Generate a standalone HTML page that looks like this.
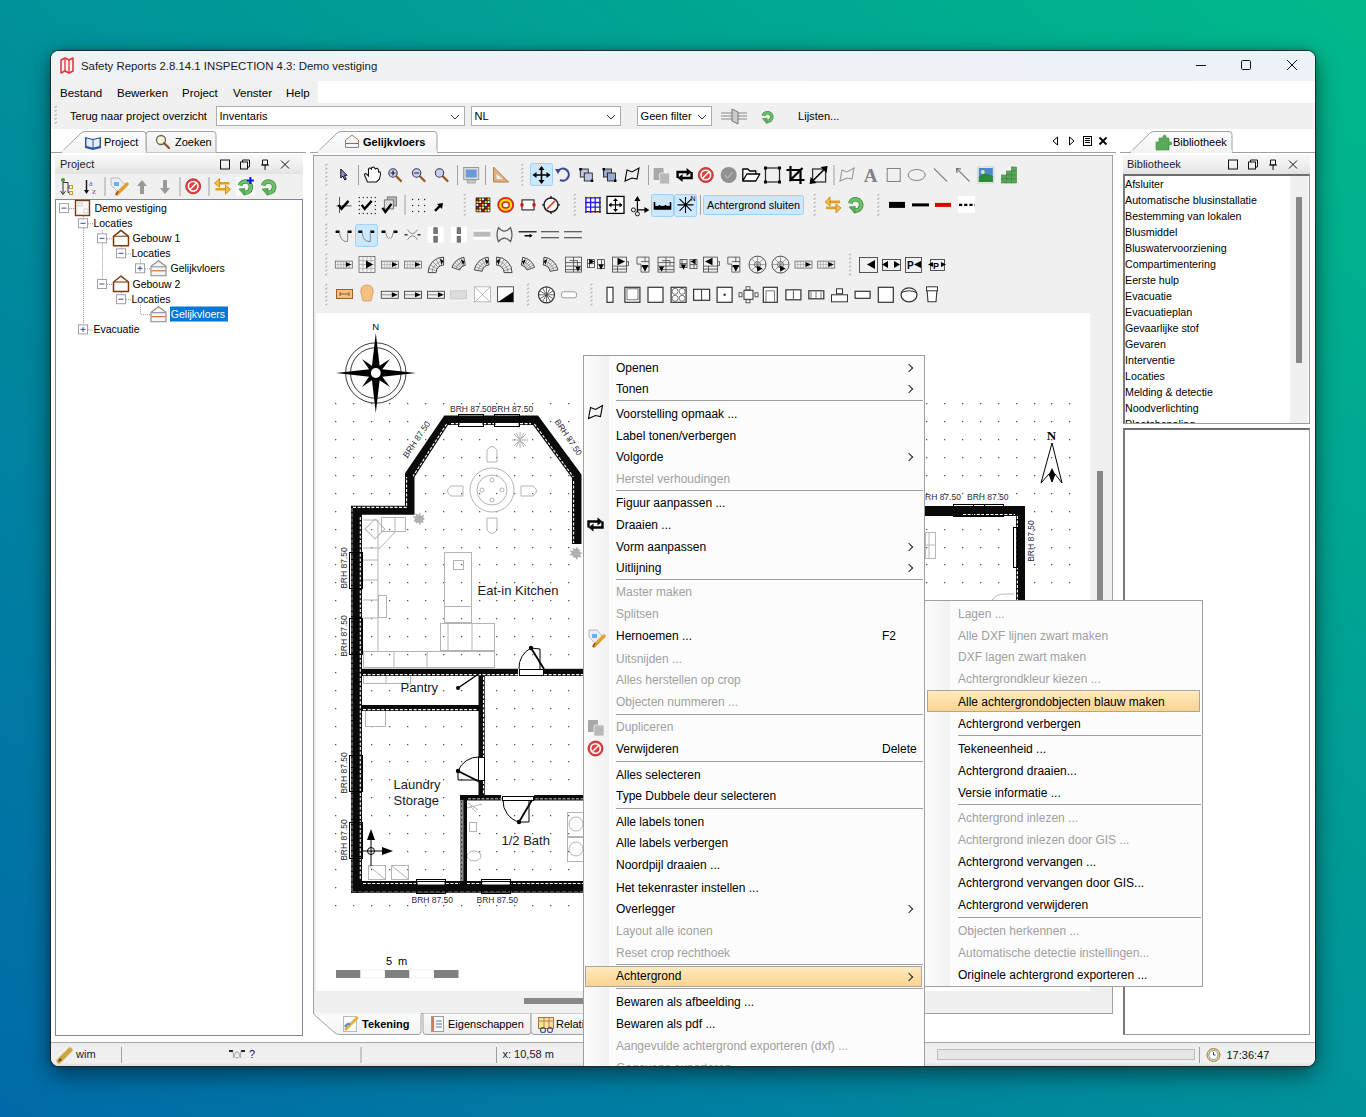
<!DOCTYPE html>
<html><head><meta charset="utf-8">
<style>
*{box-sizing:border-box;margin:0;padding:0}
html,body{width:1366px;height:1117px;overflow:hidden}
body{position:relative;font-family:"Liberation Sans",sans-serif;font-size:12px;color:#000;
background:linear-gradient(to top right,#006aa8 0%,#00929a 50%,#00b98a 100%);}
.a{position:absolute}
#shadow{position:absolute;left:51px;top:51px;width:1264px;height:1015px;border-radius:8px;box-shadow:0 0 0 1px rgba(35,35,35,.85),0 8px 24px rgba(0,0,0,.5),0 0 7px rgba(0,0,0,.3)}
#win{position:absolute;left:0;top:0;width:1366px;height:1117px;clip-path:inset(51px 51px 51px 51px round 8px);}
.menu{position:absolute;background:#fcfcfc;border:1px solid #a0a0a0;overflow:hidden}
.gut{position:absolute;left:0;top:0;bottom:0;width:25px;background:linear-gradient(to right,#fcfcfc,#f1f1f1)}
.mi{position:absolute;white-space:nowrap;font-size:12px;line-height:14px;color:#000}
.dis{color:#a0a0a0}
.sep{position:absolute;height:1px;background:#a0a0a0}
.hl{position:absolute;border:1px solid #a6a6a6;background:linear-gradient(#fdebbd,#fdd392)}
.arr{position:absolute;width:6px;height:6px;border-right:1.3px solid #222;border-top:1.3px solid #222;transform:rotate(45deg)}
</style></head><body>
<div id="shadow"></div>
<div id="win">
  <div class="a" style="left:51px;top:50px;width:1264px;height:1016px;background:#f0f0f0"></div>
  <div class="a" style="left:51px;top:50px;width:1264px;height:31px;background:linear-gradient(to right,#f1f2f4,#eef1f6 50%,#edf2f8)"></div>
  <div class="a" style="left:51px;top:81px;width:1264px;height:22px;background:#fff"></div>
  <div class="a" style="left:51px;top:81px;width:267px;height:22px;background:#f0f0f0"></div>
  <div class="a" style="left:51px;top:103px;width:1264px;height:26px;background:#f0f0f0"></div>
  <div class="a" style="left:51px;top:129px;width:1264px;height:913px;background:#fff"></div>
  <!-- left panel -->
  <div class="a" style="left:55px;top:174px;width:248px;height:25px;background:#f0f0f0"></div>
  <div class="a" style="left:55px;top:199px;width:248px;height:837px;background:#fff;border:1px solid #828790"></div>
  <!-- central panel -->
  <div class="a" style="left:313px;top:155px;width:800px;height:859px;background:#f0f0f0;border:1px solid #a0a0a0"></div>
  <!-- TB -->
<svg class="a" style="left:0;top:0" width="1366" height="1117" viewBox="0 0 1366 1117"><path d="M325.3 165.6 L327.3 164" stroke="#b4b4b4" stroke-width="1.2"/><path d="M325.3 169.6 L327.3 168" stroke="#b4b4b4" stroke-width="1.2"/><path d="M325.3 173.6 L327.3 172" stroke="#b4b4b4" stroke-width="1.2"/><path d="M325.3 177.6 L327.3 176" stroke="#b4b4b4" stroke-width="1.2"/><path d="M325.3 181.6 L327.3 180" stroke="#b4b4b4" stroke-width="1.2"/><path d="M325.3 185.6 L327.3 184" stroke="#b4b4b4" stroke-width="1.2"/><path d="M325.3 195.5 L327.3 193.9" stroke="#b4b4b4" stroke-width="1.2"/><path d="M325.3 199.5 L327.3 197.9" stroke="#b4b4b4" stroke-width="1.2"/><path d="M325.3 203.5 L327.3 201.9" stroke="#b4b4b4" stroke-width="1.2"/><path d="M325.3 207.5 L327.3 205.9" stroke="#b4b4b4" stroke-width="1.2"/><path d="M325.3 211.5 L327.3 209.9" stroke="#b4b4b4" stroke-width="1.2"/><path d="M325.3 215.5 L327.3 213.9" stroke="#b4b4b4" stroke-width="1.2"/><path d="M325.3 225.29999999999998 L327.3 223.7" stroke="#b4b4b4" stroke-width="1.2"/><path d="M325.3 229.29999999999998 L327.3 227.7" stroke="#b4b4b4" stroke-width="1.2"/><path d="M325.3 233.29999999999998 L327.3 231.7" stroke="#b4b4b4" stroke-width="1.2"/><path d="M325.3 237.29999999999998 L327.3 235.7" stroke="#b4b4b4" stroke-width="1.2"/><path d="M325.3 241.29999999999998 L327.3 239.7" stroke="#b4b4b4" stroke-width="1.2"/><path d="M325.3 245.29999999999998 L327.3 243.7" stroke="#b4b4b4" stroke-width="1.2"/><path d="M325.3 255.20000000000002 L327.3 253.60000000000002" stroke="#b4b4b4" stroke-width="1.2"/><path d="M325.3 259.20000000000005 L327.3 257.6" stroke="#b4b4b4" stroke-width="1.2"/><path d="M325.3 263.20000000000005 L327.3 261.6" stroke="#b4b4b4" stroke-width="1.2"/><path d="M325.3 267.20000000000005 L327.3 265.6" stroke="#b4b4b4" stroke-width="1.2"/><path d="M325.3 271.20000000000005 L327.3 269.6" stroke="#b4b4b4" stroke-width="1.2"/><path d="M325.3 275.20000000000005 L327.3 273.6" stroke="#b4b4b4" stroke-width="1.2"/><path d="M325.3 285.40000000000003 L327.3 283.8" stroke="#b4b4b4" stroke-width="1.2"/><path d="M325.3 289.40000000000003 L327.3 287.8" stroke="#b4b4b4" stroke-width="1.2"/><path d="M325.3 293.40000000000003 L327.3 291.8" stroke="#b4b4b4" stroke-width="1.2"/><path d="M325.3 297.40000000000003 L327.3 295.8" stroke="#b4b4b4" stroke-width="1.2"/><path d="M325.3 301.40000000000003 L327.3 299.8" stroke="#b4b4b4" stroke-width="1.2"/><path d="M325.3 305.40000000000003 L327.3 303.8" stroke="#b4b4b4" stroke-width="1.2"/><path d="M521.1999999999999 165.6 L523.1999999999999 164" stroke="#b4b4b4" stroke-width="1.2"/><path d="M521.1999999999999 169.6 L523.1999999999999 168" stroke="#b4b4b4" stroke-width="1.2"/><path d="M521.1999999999999 173.6 L523.1999999999999 172" stroke="#b4b4b4" stroke-width="1.2"/><path d="M521.1999999999999 177.6 L523.1999999999999 176" stroke="#b4b4b4" stroke-width="1.2"/><path d="M521.1999999999999 181.6 L523.1999999999999 180" stroke="#b4b4b4" stroke-width="1.2"/><path d="M521.1999999999999 185.6 L523.1999999999999 184" stroke="#b4b4b4" stroke-width="1.2"/><path d="M463.8 195.5 L465.8 193.9" stroke="#b4b4b4" stroke-width="1.2"/><path d="M463.8 199.5 L465.8 197.9" stroke="#b4b4b4" stroke-width="1.2"/><path d="M463.8 203.5 L465.8 201.9" stroke="#b4b4b4" stroke-width="1.2"/><path d="M463.8 207.5 L465.8 205.9" stroke="#b4b4b4" stroke-width="1.2"/><path d="M463.8 211.5 L465.8 209.9" stroke="#b4b4b4" stroke-width="1.2"/><path d="M463.8 215.5 L465.8 213.9" stroke="#b4b4b4" stroke-width="1.2"/><path d="M573.8 195.5 L575.8 193.9" stroke="#b4b4b4" stroke-width="1.2"/><path d="M573.8 199.5 L575.8 197.9" stroke="#b4b4b4" stroke-width="1.2"/><path d="M573.8 203.5 L575.8 201.9" stroke="#b4b4b4" stroke-width="1.2"/><path d="M573.8 207.5 L575.8 205.9" stroke="#b4b4b4" stroke-width="1.2"/><path d="M573.8 211.5 L575.8 209.9" stroke="#b4b4b4" stroke-width="1.2"/><path d="M573.8 215.5 L575.8 213.9" stroke="#b4b4b4" stroke-width="1.2"/><path d="M813.5999999999999 195.5 L815.5999999999999 193.9" stroke="#b4b4b4" stroke-width="1.2"/><path d="M813.5999999999999 199.5 L815.5999999999999 197.9" stroke="#b4b4b4" stroke-width="1.2"/><path d="M813.5999999999999 203.5 L815.5999999999999 201.9" stroke="#b4b4b4" stroke-width="1.2"/><path d="M813.5999999999999 207.5 L815.5999999999999 205.9" stroke="#b4b4b4" stroke-width="1.2"/><path d="M813.5999999999999 211.5 L815.5999999999999 209.9" stroke="#b4b4b4" stroke-width="1.2"/><path d="M813.5999999999999 215.5 L815.5999999999999 213.9" stroke="#b4b4b4" stroke-width="1.2"/><path d="M877.4 195.5 L879.4 193.9" stroke="#b4b4b4" stroke-width="1.2"/><path d="M877.4 199.5 L879.4 197.9" stroke="#b4b4b4" stroke-width="1.2"/><path d="M877.4 203.5 L879.4 201.9" stroke="#b4b4b4" stroke-width="1.2"/><path d="M877.4 207.5 L879.4 205.9" stroke="#b4b4b4" stroke-width="1.2"/><path d="M877.4 211.5 L879.4 209.9" stroke="#b4b4b4" stroke-width="1.2"/><path d="M877.4 215.5 L879.4 213.9" stroke="#b4b4b4" stroke-width="1.2"/><path d="M849.0999999999999 255.20000000000002 L851.0999999999999 253.60000000000002" stroke="#b4b4b4" stroke-width="1.2"/><path d="M849.0999999999999 259.20000000000005 L851.0999999999999 257.6" stroke="#b4b4b4" stroke-width="1.2"/><path d="M849.0999999999999 263.20000000000005 L851.0999999999999 261.6" stroke="#b4b4b4" stroke-width="1.2"/><path d="M849.0999999999999 267.20000000000005 L851.0999999999999 265.6" stroke="#b4b4b4" stroke-width="1.2"/><path d="M849.0999999999999 271.20000000000005 L851.0999999999999 269.6" stroke="#b4b4b4" stroke-width="1.2"/><path d="M849.0999999999999 275.20000000000005 L851.0999999999999 273.6" stroke="#b4b4b4" stroke-width="1.2"/><path d="M527.0 285.40000000000003 L529.0 283.8" stroke="#b4b4b4" stroke-width="1.2"/><path d="M527.0 289.40000000000003 L529.0 287.8" stroke="#b4b4b4" stroke-width="1.2"/><path d="M527.0 293.40000000000003 L529.0 291.8" stroke="#b4b4b4" stroke-width="1.2"/><path d="M527.0 297.40000000000003 L529.0 295.8" stroke="#b4b4b4" stroke-width="1.2"/><path d="M527.0 301.40000000000003 L529.0 299.8" stroke="#b4b4b4" stroke-width="1.2"/><path d="M527.0 305.40000000000003 L529.0 303.8" stroke="#b4b4b4" stroke-width="1.2"/><path d="M590.4 285.40000000000003 L592.4 283.8" stroke="#b4b4b4" stroke-width="1.2"/><path d="M590.4 289.40000000000003 L592.4 287.8" stroke="#b4b4b4" stroke-width="1.2"/><path d="M590.4 293.40000000000003 L592.4 291.8" stroke="#b4b4b4" stroke-width="1.2"/><path d="M590.4 297.40000000000003 L592.4 295.8" stroke="#b4b4b4" stroke-width="1.2"/><path d="M590.4 301.40000000000003 L592.4 299.8" stroke="#b4b4b4" stroke-width="1.2"/><path d="M590.4 305.40000000000003 L592.4 303.8" stroke="#b4b4b4" stroke-width="1.2"/><rect x="358" y="165" width="1" height="20" fill="#a0a0a0"/><rect x="457" y="165" width="1" height="20" fill="#a0a0a0"/><rect x="485" y="165" width="1" height="20" fill="#a0a0a0"/><rect x="648" y="165" width="1" height="20" fill="#a0a0a0"/><rect x="833.5" y="165" width="1" height="20" fill="#a0a0a0"/><rect x="404.5" y="194.9" width="1" height="20.0" fill="#a0a0a0"/><rect x="700" y="194.9" width="1" height="20.0" fill="#a0a0a0"/><rect x="530.5" y="163.5" width="22" height="22" rx="2" fill="#cce8ff" stroke="#99d1ff"/><rect x="651.5" y="194.5" width="22" height="22" rx="2" fill="#cce8ff" stroke="#99d1ff"/><rect x="674.5" y="194.5" width="22" height="22" rx="2" fill="#cce8ff" stroke="#99d1ff"/><rect x="355.5" y="224.5" width="22" height="22" rx="2" fill="#cce8ff" stroke="#99d1ff"/><rect x="703.5" y="195.5" width="100" height="19" rx="2" fill="#cce8ff" stroke="#99d1ff"/><text x="707" y="209" font-size="10.8" font-family="Liberation Sans" fill="#000">Achtergrond sluiten</text><path d="M340.8 169 L340.8 178 L342.8 176 L344.8 180 L346.3 179.2 L344.3 175.3 L347.0 175.3 Z" fill="#8c8cd8" stroke="#111" stroke-width="1"/><path d="M367.5 182 L364.5 175 Q364.5 173 366.5 174 L368.5 176 L368.5 169 Q369.5 167 371.5 169 L371.5 168 Q373.5 166 374.5 168 L375.5 169 Q377.5 167 378.5 170 L378.5 172 Q380.5 171 380.5 174 L379.5 179 L376.5 182 Z" fill="#fff" stroke="#111" stroke-width="1.1"/><path d="M396.5 176.5 L401 181" stroke="#9a5a20" stroke-width="2.4" stroke-linecap="round"/><circle cx="393" cy="173" r="4.2" fill="#c8d0f0" stroke="#3a3a5a" stroke-width="1.1"/><path d="M390.5 173 h5 M393 170.5 v5" stroke="#222" stroke-width="1.2"/><path d="M420.1 176.5 L424.6 181" stroke="#9a5a20" stroke-width="2.4" stroke-linecap="round"/><circle cx="416.6" cy="173" r="4.2" fill="#c8d0f0" stroke="#3a3a5a" stroke-width="1.1"/><path d="M414.1 173 h5" stroke="#222" stroke-width="1.2"/><path d="M443.0 176.5 L447.5 181" stroke="#9a5a20" stroke-width="2.4" stroke-linecap="round"/><circle cx="439.5" cy="173" r="4.2" fill="#c8d0f0" stroke="#3a3a5a" stroke-width="1.1"/><rect x="463.7" y="167.5" width="15" height="12" fill="#ddd" stroke="#999"/><rect x="465.7" y="169.5" width="11" height="8" fill="#6a9ad8"/><rect x="467.2" y="180" width="8" height="3" fill="#ccc" stroke="#999" stroke-width=".8"/><path d="M493.5 167 L508.5 182 L493.5 182 Z" fill="#e0b080" stroke="#b08050"/><path d="M496.5 174 L502.5 179 L496.5 179 Z" fill="#f0f0f0"/><path d="M541.5 167 L541.5 183 M533.5 175 L549.5 175" stroke="#000" stroke-width="1.6"/><path d="M538.5 170 L541.5 166 L544.5 170Z M538.5 180 L541.5 184 L544.5 180Z M536.5 172 L532.5 175 L536.5 178Z M546.5 172 L550.5 175 L546.5 178Z" fill="#000"/><path d="M558 171 A6 6 0 1 1 560 180" fill="none" stroke="#3a4a9a" stroke-width="2.2"/><path d="M555 169 L561 169 L558 174Z" fill="#3a4a9a"/><rect x="580.3" y="169" width="8" height="8" fill="#c0c4e4" stroke="#222" stroke-width=".9"/><rect x="584.3" y="173" width="8" height="8" fill="#c0c4e4" stroke="#222" stroke-width=".9"/><rect x="579.3" y="168" width="2.5" height="2.5" fill="#000"/><rect x="590.8" y="179.5" width="2.5" height="2.5" fill="#000"/><rect x="603.5" y="169" width="8" height="8" fill="#9aa8d0" stroke="#222" stroke-width=".9"/><rect x="607.5" y="173" width="8" height="8" fill="#9aa8d0" stroke="#222" stroke-width=".9"/><rect x="602.5" y="168" width="2.5" height="2.5" fill="#000"/><rect x="614.0" y="179.5" width="2.5" height="2.5" fill="#000"/><path d="M625 181 L627 170 L632 172 L639 168 L637 179 L632 178 Z" fill="none" stroke="#000" stroke-width="1.1"/><rect x="653.6" y="168" width="10" height="12" rx="1" fill="#a8a8a8"/><rect x="659.6" y="173" width="10" height="11" rx="1" fill="#b8b8b8" stroke="#f0f0f0" stroke-width=".8"/><path d="M677.6 178 L677.6 172 L687.6 172 M691.6 172 L691.6 178 L681.6 178" fill="none" stroke="#000" stroke-width="2.4"/><path d="M686.6 168 L691.6 172 L686.6 176Z M682.6 174 L677.6 178 L682.6 182Z" fill="#000"/><circle cx="705.8" cy="175" r="7.5" fill="#e04040" stroke="#b02020" stroke-width=".8"/><circle cx="705.8" cy="175" r="4.8" fill="none" stroke="#fff" stroke-width="1.6"/><path d="M702.3 178.5 L709.3 171.5" stroke="#fff" stroke-width="1.6"/><circle cx="728.7" cy="175" r="8" fill="#909090"/><path d="M724.7 175 L727.7 178 L732.7 172" stroke="#b0b0b0" stroke-width="1.6" fill="none"/><path d="M742.8 181 L742.8 169 L747.8 169 L749.8 171 L755.8 171 L755.8 174 M742.8 181 L746.8 174 L759.8 174 L755.8 181 Z" fill="#fff" stroke="#000" stroke-width="1.3" stroke-linejoin="round"/><rect x="765.5" y="168" width="14" height="14" fill="none" stroke="#222" stroke-width="1.2"/><rect x="764.0" y="166.5" width="3" height="3" fill="#000"/><rect x="764.0" y="180.5" width="3" height="3" fill="#000"/><rect x="778.0" y="166.5" width="3" height="3" fill="#000"/><rect x="778.0" y="180.5" width="3" height="3" fill="#000"/><path d="M790.5 166 L790.5 180 L804.5 180 M786.5 170 L800.5 170 L800.5 184 M789.5 181 L802.5 168" fill="none" stroke="#000" stroke-width="2.2"/><rect x="812.6" y="169" width="13" height="13" fill="none" stroke="#333" stroke-width="1.3"/><path d="M810.6 183 L826.6 167" stroke="#000" stroke-width="1.6"/><path d="M827.6 166 L820.6 167 L826.6 173Z M809.6 184 L816.6 183 L810.6 177Z" fill="#000"/><path d="M840 181 L842 170 L847 172 L854 168 L852 179 L847 178 Z" fill="none" stroke="#999" stroke-width="1.1"/><text x="870.7" y="182" font-family="Liberation Serif" font-weight="bold" font-size="19" text-anchor="middle" fill="#808080">A</text><rect x="887.2" y="168.5" width="13" height="13" fill="none" stroke="#808080" stroke-width="1"/><ellipse cx="916.7" cy="175" rx="8.5" ry="5.5" fill="none" stroke="#808080" stroke-width="1"/><path d="M934.0 168.5 L947.0 181.5" stroke="#808080" stroke-width="1.1"/><path d="M956.5 168.5 L969.5 181.5" stroke="#808080" stroke-width="1.1"/><path d="M956.5 168.5 L961 169 M956.5 168.5 L957 173" stroke="#666" stroke-width="1.1"/><rect x="977.8" y="167" width="16" height="16" fill="#fff" stroke="#ccc"/><rect x="978.8" y="168" width="14" height="14" fill="#4a8ad0"/><path d="M978.8 177 Q983.8 171 992.8 176 L992.8 182 L978.8 182 Z" fill="#2a8a3a"/><circle cx="982.8" cy="172" r="2" fill="#e8e8a0"/><rect x="1011.5" y="167" width="5" height="4" fill="#5aa55a" stroke="#3a853a" stroke-width=".6"/><rect x="1006.5" y="171" width="5" height="4" fill="#5aa55a" stroke="#3a853a" stroke-width=".6"/><rect x="1011.5" y="171" width="5" height="4" fill="#5aa55a" stroke="#3a853a" stroke-width=".6"/><rect x="1001.5" y="175" width="5" height="4" fill="#5aa55a" stroke="#3a853a" stroke-width=".6"/><rect x="1006.5" y="175" width="5" height="4" fill="#5aa55a" stroke="#3a853a" stroke-width=".6"/><rect x="1011.5" y="175" width="5" height="4" fill="#5aa55a" stroke="#3a853a" stroke-width=".6"/><rect x="1001.5" y="179" width="5" height="4" fill="#5aa55a" stroke="#3a853a" stroke-width=".6"/><rect x="1006.5" y="179" width="5" height="4" fill="#5aa55a" stroke="#3a853a" stroke-width=".6"/><rect x="1011.5" y="179" width="5" height="4" fill="#5aa55a" stroke="#3a853a" stroke-width=".6"/><path d="M336.5 205.9 L351.5 205.9 M339.5 196.9 L339.5 212.9" stroke="#555" stroke-width="1"/><path d="M338.5 204.9 L341.5 208.9 L348.5 200.9" stroke="#000" stroke-width="2.4" fill="none"/><rect x="358.7" y="196.9" width="1.2" height="1.2" fill="#222"/><rect x="358.7" y="212.9" width="1.2" height="1.2" fill="#222"/><rect x="362.7" y="196.9" width="1.2" height="1.2" fill="#222"/><rect x="362.7" y="212.9" width="1.2" height="1.2" fill="#222"/><rect x="366.7" y="196.9" width="1.2" height="1.2" fill="#222"/><rect x="366.7" y="212.9" width="1.2" height="1.2" fill="#222"/><rect x="370.7" y="196.9" width="1.2" height="1.2" fill="#222"/><rect x="370.7" y="212.9" width="1.2" height="1.2" fill="#222"/><rect x="374.7" y="196.9" width="1.2" height="1.2" fill="#222"/><rect x="374.7" y="212.9" width="1.2" height="1.2" fill="#222"/><rect x="358.7" y="200.9" width="1.2" height="1.2" fill="#222"/><rect x="358.7" y="204.9" width="1.2" height="1.2" fill="#222"/><rect x="358.7" y="208.9" width="1.2" height="1.2" fill="#222"/><rect x="374.7" y="200.9" width="1.2" height="1.2" fill="#222"/><rect x="374.7" y="204.9" width="1.2" height="1.2" fill="#222"/><rect x="374.7" y="208.9" width="1.2" height="1.2" fill="#222"/><path d="M361.7 204.9 L364.7 208.9 L371.7 200.9" stroke="#000" stroke-width="2.4" fill="none"/><rect x="387.4" y="196.9" width="9" height="9" fill="#bbb" stroke="#777"/><rect x="384.4" y="199.9" width="9" height="9" fill="#ddd" stroke="#777"/><path d="M382.4 207.9 L385.4 211.9 L391.4 203.9" stroke="#000" stroke-width="2.4" fill="none"/><rect x="412" y="198.9" width="1.2" height="1.2" fill="#222"/><rect x="412" y="204.9" width="1.2" height="1.2" fill="#222"/><rect x="412" y="210.9" width="1.2" height="1.2" fill="#222"/><rect x="418" y="198.9" width="1.2" height="1.2" fill="#222"/><rect x="418" y="204.9" width="1.2" height="1.2" fill="#222"/><rect x="418" y="210.9" width="1.2" height="1.2" fill="#222"/><rect x="424" y="198.9" width="1.2" height="1.2" fill="#222"/><rect x="424" y="204.9" width="1.2" height="1.2" fill="#222"/><rect x="424" y="210.9" width="1.2" height="1.2" fill="#222"/><path d="M435 210.9 L440 205.9" stroke="#000" stroke-width="2.5"/><path d="M443 202.9 L437 203.9 L442 208.9Z" fill="#000"/><rect x="475" y="196.9" width="16" height="16" fill="#fff"/><rect x="476.0" y="197.9" width="2.8" height="2.8" fill="#e00000"/><rect x="478.8" y="197.9" width="2.8" height="2.8" fill="#f0e000"/><rect x="481.6" y="197.9" width="2.8" height="2.8" fill="#ffffff"/><rect x="484.4" y="197.9" width="2.8" height="2.8" fill="#e00000"/><rect x="487.2" y="197.9" width="2.8" height="2.8" fill="#f0e000"/><rect x="476.0" y="200.7" width="2.8" height="2.8" fill="#f0e000"/><rect x="478.8" y="200.7" width="2.8" height="2.8" fill="#ffffff"/><rect x="481.6" y="200.7" width="2.8" height="2.8" fill="#e00000"/><rect x="484.4" y="200.7" width="2.8" height="2.8" fill="#f0e000"/><rect x="487.2" y="200.7" width="2.8" height="2.8" fill="#ffffff"/><rect x="476.0" y="203.5" width="2.8" height="2.8" fill="#ffffff"/><rect x="478.8" y="203.5" width="2.8" height="2.8" fill="#e00000"/><rect x="481.6" y="203.5" width="2.8" height="2.8" fill="#f0e000"/><rect x="484.4" y="203.5" width="2.8" height="2.8" fill="#ffffff"/><rect x="487.2" y="203.5" width="2.8" height="2.8" fill="#e00000"/><rect x="476.0" y="206.3" width="2.8" height="2.8" fill="#e00000"/><rect x="478.8" y="206.3" width="2.8" height="2.8" fill="#f0e000"/><rect x="481.6" y="206.3" width="2.8" height="2.8" fill="#ffffff"/><rect x="484.4" y="206.3" width="2.8" height="2.8" fill="#e00000"/><rect x="487.2" y="206.3" width="2.8" height="2.8" fill="#f0e000"/><rect x="476.0" y="209.1" width="2.8" height="2.8" fill="#f0e000"/><rect x="478.8" y="209.1" width="2.8" height="2.8" fill="#ffffff"/><rect x="481.6" y="209.1" width="2.8" height="2.8" fill="#e00000"/><rect x="484.4" y="209.1" width="2.8" height="2.8" fill="#f0e000"/><rect x="487.2" y="209.1" width="2.8" height="2.8" fill="#ffffff"/><path d="M476.0 197.9 v14 M476 197.9 h14" stroke="#000" stroke-width=".7"/><path d="M478.8 197.9 v14 M476 200.7 h14" stroke="#000" stroke-width=".7"/><path d="M481.6 197.9 v14 M476 203.5 h14" stroke="#000" stroke-width=".7"/><path d="M484.4 197.9 v14 M476 206.3 h14" stroke="#000" stroke-width=".7"/><path d="M487.2 197.9 v14 M476 209.1 h14" stroke="#000" stroke-width=".7"/><path d="M490.0 197.9 v14 M476 211.9 h14" stroke="#000" stroke-width=".7"/><ellipse cx="505.7" cy="204.9" rx="7.5" ry="7" fill="#f8e000" stroke="#e02020" stroke-width="1.8"/><ellipse cx="505.7" cy="204.9" rx="3.5" ry="3" fill="#f0f0f0" stroke="#e02020" stroke-width="1.5"/><rect x="522" y="199.9" width="12" height="10" fill="#fff" stroke="#222" stroke-width="1.1"/><rect x="520.5" y="203.4" width="3" height="3" fill="#d00"/><rect x="532.5" y="203.4" width="3" height="3" fill="#d00"/><circle cx="551" cy="204.9" r="7" fill="#fff" stroke="#222" stroke-width="1.5"/><path d="M547 208.9 L555 200.9" stroke="#e04020" stroke-width="1.6"/><path d="M551 195.9 v3 M551 213.9 v-3 M542 204.9 h3 M560 204.9 h-3" stroke="#222" stroke-width="1.4"/><rect x="585" y="196.9" width="16" height="16" fill="#f0c000"/><rect x="586" y="197.9" width="14" height="14" fill="#fff"/><path d="M586.0 196.9 v16 M585 197.9 h16" stroke="#2020e0" stroke-width="1.3"/><path d="M590.6 196.9 v16 M585 202.5 h16" stroke="#2020e0" stroke-width="1.3"/><path d="M595.2 196.9 v16 M585 207.1 h16" stroke="#2020e0" stroke-width="1.3"/><path d="M599.8 196.9 v16 M585 211.70000000000002 h16" stroke="#2020e0" stroke-width="1.3"/><rect x="607.0" y="196.4" width="17" height="17" fill="#fff" stroke="#000" stroke-width="1.3"/><path d="M615.5 198.9 v12 M609.5 204.9 h12" stroke="#000" stroke-width="1.1"/><path d="M613.0 200.9 L615.5 197.9 L618.0 200.9Z M613.0 208.9 L615.5 211.9 L618.0 208.9Z M611.5 202.4 L608.5 204.9 L611.5 207.4Z M619.5 202.4 L622.5 204.9 L619.5 207.4Z" fill="#000"/><path d="M637.4 211.9 L637.4 197.9 M637.4 209.9 L647.4 209.9" stroke="#000" stroke-width="1.2"/><path d="M634.4 200.9 L637.4 195.9 L640.4 200.9Z M644.4 206.9 L649.4 209.9 L644.4 212.9Z" fill="#000"/><circle cx="633.4" cy="209.9" r="2" fill="none" stroke="#000" stroke-width=".9"/><circle cx="637.4" cy="213.9" r="2" fill="none" stroke="#000" stroke-width=".9"/><path d="M654.5 201.9 L654.5 208.9 L670.5 208.9 L670.5 201.9 M659.5 208.9 v-4 M665.5 208.9 v-4" stroke="#000" stroke-width="1.6" fill="none"/><rect x="654.5" y="205.9" width="16" height="3" fill="#000"/><path d="M677.5 204.9 h16 M685.5 196.9 v16 M679.5 198.9 L691.5 210.9 M679.5 210.9 L691.5 198.9" stroke="#000" stroke-width="1.1"/><text x="690.5" y="200.9" font-size="7" font-family="Liberation Sans" fill="#000">N</text><path d="M840 201.9 L828 201.9 M826 207.9 L838 207.9" stroke="#e0a020" stroke-width="2.6"/><path d="M830 196.9 L825 201.9 L830 205.9Z M836 203.9 L841 207.9 L836 212.9Z" fill="#f0c040" stroke="#c08010" stroke-width=".8"/><path d="M850.2 203.4 A5.6 5.6 0 1 1 854.7 210.5" fill="none" stroke="#3f8f3f" stroke-width="4.6"/><path d="M850.2 203.4 A5.6 5.6 0 1 1 854.7 210.5" fill="none" stroke="#6cbf6c" stroke-width="3"/><path d="M849.2 206.9 L855.2 206.4 L854.7 213.4 Z" fill="#5aaf5a" stroke="#3f8f3f" stroke-width=".7"/><rect x="889" y="201.9" width="16" height="6" fill="#000"/><rect x="912" y="203.4" width="17" height="3" fill="#000"/><rect x="935" y="202.9" width="16" height="4" fill="#e00000"/><rect x="958" y="196" width="17" height="17" fill="#fff"/><path d="M959 204.9 h16" stroke="#000" stroke-width="2.4" stroke-dasharray="3.2 2"/><path d="M335.6 231.7 h4 M347.6 231.7 h4" stroke="#000" stroke-width="2.4"/><path d="M339.6 231.7 Q339.6 241.7 347.6 241.7 L347.6 231.7" fill="none" stroke="#888" stroke-width="1"/><path d="M358.3 231.7 h4 M370.3 231.7 h4" stroke="#000" stroke-width="2.4"/><path d="M362.3 231.7 Q362.3 241.7 370.3 241.7 L370.3 231.7" fill="none" stroke="#888" stroke-width="1"/><path d="M381.5 231.7 h4 M393.5 231.7 h4" stroke="#000" stroke-width="2.4"/><path d="M385.5 231.7 Q387.5 240.7 389.5 237.7 Q391.5 240.7 393.5 231.7" fill="none" stroke="#888" stroke-width="1"/><path d="M404.5 234.7 h3 M417.5 234.7 h3" stroke="#333" stroke-width="1.6"/><path d="M407.5 229.7 Q412.5 237.7 417.5 229.7 M407.5 239.7 Q412.5 231.7 417.5 239.7" fill="none" stroke="#888" stroke-width="1"/><rect x="427.6" y="226.7" width="16" height="16" fill="#fff"/><rect x="433.8" y="227.7" width="3.6" height="6" fill="#777" stroke="#555" stroke-width=".6"/><rect x="433.8" y="236.2" width="3.6" height="6" fill="#777" stroke="#555" stroke-width=".6"/><rect x="450.9" y="226.7" width="16" height="16" fill="#fff"/><rect x="457.09999999999997" y="227.7" width="3.6" height="6" fill="#777" stroke="#555" stroke-width=".6"/><rect x="457.09999999999997" y="236.2" width="3.6" height="6" fill="#777" stroke="#555" stroke-width=".6"/><rect x="473.5" y="229.7" width="17" height="10" fill="#fff"/><rect x="473.5" y="231.7" width="17" height="5" fill="#bbb"/><path d="M498.5 227.7 Q504.5 234.7 510.5 227.7 Q513.5 234.7 510.5 241.7 Q504.5 234.7 498.5 241.7 Q495.5 234.7 498.5 227.7Z" fill="none" stroke="#555" stroke-width="1.2"/><path d="M518.6 231.7 h18" stroke="#333" stroke-width="1.4"/><path d="M524.6 235.7 h6" stroke="#000" stroke-width="1.5"/><path d="M529.6 233.7 L532.6 235.7 L529.6 237.7Z" fill="#000"/><path d="M541 231.7 h18 M541 237.7 h18" stroke="#333" stroke-width="1.1"/><path d="M564 231.7 h18 M564 237.7 h18" stroke="#333" stroke-width="1.1"/><rect x="335.3" y="261.1" width="17" height="7" fill="none" stroke="#555" stroke-width=".7"/><path d="M335.3 264.6 h17" stroke="#999" stroke-width=".5"/><path d="M338.1 261.1 v7" stroke="#888" stroke-width=".5"/><path d="M340.9 261.1 v7" stroke="#888" stroke-width=".5"/><path d="M343.7 261.1 v7" stroke="#888" stroke-width=".5"/><path d="M346.5 261.1 v7" stroke="#888" stroke-width=".5"/><path d="M349.3 261.1 v7" stroke="#888" stroke-width=".5"/><path d="M345.8 262.1 L351.3 264.6 L345.8 267.1Z" fill="#000"/><rect x="359" y="256.6" width="16" height="16" fill="none" stroke="#555" stroke-width=".7"/><path d="M363 256.6 v16 M359 260.6 h16" stroke="#888" stroke-width=".5"/><path d="M367 256.6 v16 M359 264.6 h16" stroke="#888" stroke-width=".5"/><path d="M371 256.6 v16 M359 268.6 h16" stroke="#888" stroke-width=".5"/><path d="M366 260.6 L373 264.6 L366 268.6Z" fill="#000"/><rect x="381.5" y="261.1" width="17" height="7" fill="none" stroke="#555" stroke-width=".7"/><path d="M381.5 264.6 h17" stroke="#999" stroke-width=".5"/><path d="M384.3 261.1 v7" stroke="#888" stroke-width=".5"/><path d="M387.1 261.1 v7" stroke="#888" stroke-width=".5"/><path d="M389.9 261.1 v7" stroke="#888" stroke-width=".5"/><path d="M392.7 261.1 v7" stroke="#888" stroke-width=".5"/><path d="M395.5 261.1 v7" stroke="#888" stroke-width=".5"/><path d="M392 262.1 L397.5 264.6 L392 267.1Z" fill="#000"/><rect x="404.5" y="261.1" width="17" height="7" fill="none" stroke="#555" stroke-width=".7"/><path d="M404.5 264.6 h17" stroke="#999" stroke-width=".5"/><path d="M407.3 261.1 v7" stroke="#888" stroke-width=".5"/><path d="M410.1 261.1 v7" stroke="#888" stroke-width=".5"/><path d="M412.9 261.1 v7" stroke="#888" stroke-width=".5"/><path d="M415.7 261.1 v7" stroke="#888" stroke-width=".5"/><path d="M418.5 261.1 v7" stroke="#888" stroke-width=".5"/><path d="M415 262.1 L420.5 264.6 L415 267.1Z" fill="#000"/><circle cx="757.5" cy="264.6" r="8.5" fill="none" stroke="#444" stroke-width=".9"/><circle cx="757.5" cy="264.6" r="3" fill="none" stroke="#444" stroke-width=".8"/><path d="M757.5 264.6 L766.0 264.6" stroke="#666" stroke-width=".6"/><path d="M757.5 264.6 L763.5105468599343 270.61026841701226" stroke="#666" stroke-width=".6"/><path d="M757.5 264.6 L757.5003937777565 273.0999999908788" stroke="#666" stroke-width=".6"/><path d="M757.5 264.6 L751.4900100388088 270.61082528995655" stroke="#666" stroke-width=".6"/><path d="M757.5 264.6 L749.000000036485 264.6007875555121" stroke="#666" stroke-width=".6"/><path d="M757.5 264.6 L751.4888962929215 258.5902885075283" stroke="#666" stroke-width=".6"/><path d="M757.5 264.6 L757.498818666734 256.1000000820911" stroke="#666" stroke-width=".6"/><path d="M757.5 264.6 L763.5094330108543 258.5886178887003" stroke="#666" stroke-width=".6"/><path d="M756.5 265.6 L762.5 268.6 L757.5 271.6Z" fill="#000"/><circle cx="780.5" cy="264.6" r="8.5" fill="none" stroke="#444" stroke-width=".9"/><circle cx="780.5" cy="264.6" r="3" fill="none" stroke="#444" stroke-width=".8"/><path d="M780.5 264.6 L789.0 264.6" stroke="#666" stroke-width=".6"/><path d="M780.5 264.6 L786.5105468599343 270.61026841701226" stroke="#666" stroke-width=".6"/><path d="M780.5 264.6 L780.5003937777565 273.0999999908788" stroke="#666" stroke-width=".6"/><path d="M780.5 264.6 L774.4900100388088 270.61082528995655" stroke="#666" stroke-width=".6"/><path d="M780.5 264.6 L772.000000036485 264.6007875555121" stroke="#666" stroke-width=".6"/><path d="M780.5 264.6 L774.4888962929215 258.5902885075283" stroke="#666" stroke-width=".6"/><path d="M780.5 264.6 L780.498818666734 256.1000000820911" stroke="#666" stroke-width=".6"/><path d="M780.5 264.6 L786.5094330108543 258.5886178887003" stroke="#666" stroke-width=".6"/><path d="M779.5 265.6 L785.5 268.6 L780.5 271.6Z" fill="#000"/><rect x="795.0" y="261.1" width="17" height="7" fill="none" stroke="#555" stroke-width=".7"/><path d="M795.0 264.6 h17" stroke="#999" stroke-width=".5"/><path d="M797.8 261.1 v7" stroke="#888" stroke-width=".5"/><path d="M800.6 261.1 v7" stroke="#888" stroke-width=".5"/><path d="M803.4 261.1 v7" stroke="#888" stroke-width=".5"/><path d="M806.2 261.1 v7" stroke="#888" stroke-width=".5"/><path d="M809.0 261.1 v7" stroke="#888" stroke-width=".5"/><path d="M805.5 262.1 L811.0 264.6 L805.5 267.1Z" fill="#000"/><rect x="817.7" y="261.1" width="17" height="7" fill="none" stroke="#555" stroke-width=".7"/><path d="M817.7 264.6 h17" stroke="#999" stroke-width=".5"/><path d="M820.5 261.1 v7" stroke="#888" stroke-width=".5"/><path d="M823.3 261.1 v7" stroke="#888" stroke-width=".5"/><path d="M826.1 261.1 v7" stroke="#888" stroke-width=".5"/><path d="M828.9 261.1 v7" stroke="#888" stroke-width=".5"/><path d="M831.7 261.1 v7" stroke="#888" stroke-width=".5"/><path d="M828.2 262.1 L833.7 264.6 L828.2 267.1Z" fill="#000"/><rect x="565.5" y="257.1" width="16" height="15" stroke="#444" stroke-width=".8" fill="none"/><path d="M565.5 262.6 h16 M565.5 266.1 h16 M565.5 269.6 h16 M573.5 257.1 v15 M569.5 260.6 h8 v5" stroke="#444" stroke-width=".8" fill="none"/><path d="M575.3 266.44 L580.7 266.44 L578.0 271.84000000000003 Z" fill="#000"/><rect x="587.5" y="259.6" width="7" height="8" stroke="#444" stroke-width=".8" fill="none"/><rect x="597.5" y="259.6" width="7" height="9" stroke="#444" stroke-width=".8" fill="none"/><path d="M587.5 263.6 h7 M589.5 259.6 v8 M597.5 264.6 h7 M601.5 259.6 v9" stroke="#444" stroke-width=".8" fill="none"/><path d="M589.4 258.975 L589.4 264.225 L594.65 261.6 Z" fill="#000"/><path d="M598.375 264.5 L603.625 264.5 L601.0 269.75 Z" fill="#000"/><rect x="612.5" y="257.1" width="14" height="15" stroke="#444" stroke-width=".8" fill="none"/><path d="M612.5 266.1 h14 M612.5 269.1 h14 M617.5 266.1 v6 M626.5 261.6 h2 v4 h-2" stroke="#444" stroke-width=".8" fill="none"/><path d="M617.5 257.85 L617.5 265.35 L625.0 261.6 Z" fill="#000"/><path d="M637 257.1 h12 v15 h-8 v-8 h-4 z M641 261.6 h8 M641 266.6 h8 M645 257.1 v5" stroke="#444" stroke-width=".8" fill="none"/><path d="M641.625 264.90000000000003 L648.375 264.90000000000003 L645 271.65000000000003 Z" fill="#000"/><rect x="658" y="257.1" width="16" height="15" stroke="#444" stroke-width=".8" fill="none"/><path d="M658 262.6 h16 M658 266.1 h16 M658 269.6 h16 M666 257.1 v15 M662 260.6 h8 v5" stroke="#444" stroke-width=".8" fill="none"/><path d="M658.8 266.44 L664.2 266.44 L661.5 271.84000000000003 Z" fill="#000"/><rect x="680" y="259.6" width="7" height="8" stroke="#444" stroke-width=".8" fill="none"/><rect x="690" y="259.6" width="7" height="9" stroke="#444" stroke-width=".8" fill="none"/><path d="M680 263.6 h7 M682 259.6 v8 M690 264.6 h7 M694 259.6 v9" stroke="#444" stroke-width=".8" fill="none"/><path d="M680.875 264.5 L686.125 264.5 L683.5 269.75 Z" fill="#000"/><path d="M695.6 258.975 L695.6 264.225 L690.35 261.6 Z" fill="#000"/><rect x="703.5" y="257.1" width="14" height="15" stroke="#444" stroke-width=".8" fill="none"/><path d="M703.5 266.1 h14 M703.5 269.1 h14 M708.5 266.1 v6 M717.5 261.6 h2 v4 h-2" stroke="#444" stroke-width=".8" fill="none"/><path d="M712.5 257.85 L712.5 265.35 L705.0 261.6 Z" fill="#000"/><path d="M727.8 257.1 h12 v15 h-8 v-8 h-4 z M731.8 261.6 h8 M731.8 266.6 h8 M735.8 257.1 v5" stroke="#444" stroke-width=".8" fill="none"/><path d="M732.425 264.90000000000003 L739.175 264.90000000000003 L735.8 271.65000000000003 Z" fill="#000"/><path d="M428.1 272.6 A15.5 15.5 0 0 1 443.6 257.1 L443.6 265.1 A7.5 7.5 0 0 0 436.1 272.6 Z" fill="none" stroke="#333" stroke-width=".9"/><path d="M432.1 272.6 A11.5 11.5 0 0 1 443.6 261.1" fill="none" stroke="#777" stroke-width=".6"/><path d="M436.4 270.7 L428.6 268.6" stroke="#666" stroke-width=".6"/><path d="M437.1 268.9 L430.2 264.9" stroke="#666" stroke-width=".6"/><path d="M438.3 267.3 L432.6 261.6" stroke="#666" stroke-width=".6"/><path d="M439.9 266.1 L435.9 259.2" stroke="#666" stroke-width=".6"/><path d="M441.7 265.4 L439.6 257.6" stroke="#666" stroke-width=".6"/><path d="M443.6 261.1 L440.1 258.5 L441.5 264.4 Z" fill="#000"/><path d="M452.0 267.3 A15.5 15.5 0 0 1 463.9 257.3 L465.3 265.2 A7.5 7.5 0 0 0 459.6 270.0 Z" fill="none" stroke="#333" stroke-width=".9"/><path d="M455.8 268.7 A11.5 11.5 0 0 1 464.6 261.3" fill="none" stroke="#777" stroke-width=".6"/><path d="M460.1 268.9 L453.2 264.9" stroke="#666" stroke-width=".6"/><path d="M460.9 267.8 L454.7 262.6" stroke="#666" stroke-width=".6"/><path d="M461.8 266.9 L456.6 260.7" stroke="#666" stroke-width=".6"/><path d="M462.9 266.1 L458.9 259.2" stroke="#666" stroke-width=".6"/><path d="M464.0 265.6 L461.3 258.0" stroke="#666" stroke-width=".6"/><path d="M464.6 261.3 L460.7 259.4 L463.1 264.8 Z" fill="#000"/><path d="M474.3 269.9 A15.5 15.5 0 0 1 488.2 257.2 L488.9 265.1 A7.5 7.5 0 0 0 482.2 271.3 Z" fill="none" stroke="#333" stroke-width=".9"/><path d="M478.3 270.6 A11.5 11.5 0 0 1 488.6 261.1" fill="none" stroke="#777" stroke-width=".6"/><path d="M482.7 269.7 L475.3 266.7" stroke="#666" stroke-width=".6"/><path d="M483.5 268.3 L476.9 263.7" stroke="#666" stroke-width=".6"/><path d="M484.5 267.1 L479.1 261.2" stroke="#666" stroke-width=".6"/><path d="M485.9 266.1 L481.9 259.2" stroke="#666" stroke-width=".6"/><path d="M487.3 265.4 L484.9 257.8" stroke="#666" stroke-width=".6"/><path d="M488.6 261.1 L484.9 258.9 L486.8 264.6 Z" fill="#000"/><path d="M512.1 272.6 A15.5 15.5 0 0 0 496.6 257.1 L496.6 265.1 A7.5 7.5 0 0 1 504.1 272.6 Z" fill="none" stroke="#333" stroke-width=".9"/><path d="M508.1 272.6 A11.5 11.5 0 0 0 496.6 261.1" fill="none" stroke="#777" stroke-width=".6"/><path d="M503.8 270.7 L511.6 268.6" stroke="#666" stroke-width=".6"/><path d="M503.1 268.9 L510.0 264.9" stroke="#666" stroke-width=".6"/><path d="M501.9 267.3 L507.6 261.6" stroke="#666" stroke-width=".6"/><path d="M500.4 266.1 L504.4 259.2" stroke="#666" stroke-width=".6"/><path d="M498.5 265.4 L500.6 257.6" stroke="#666" stroke-width=".6"/><path d="M496.6 261.1 L500.1 258.5 L498.7 264.4 Z" fill="#000"/><path d="M534.6 267.3 A15.5 15.5 0 0 0 522.7 257.3 L521.3 265.2 A7.5 7.5 0 0 1 527.0 270.0 Z" fill="none" stroke="#333" stroke-width=".9"/><path d="M530.8 268.7 A11.5 11.5 0 0 0 522.0 261.3" fill="none" stroke="#777" stroke-width=".6"/><path d="M526.5 268.9 L533.4 264.9" stroke="#666" stroke-width=".6"/><path d="M525.7 267.8 L531.9 262.6" stroke="#666" stroke-width=".6"/><path d="M524.8 266.9 L530.0 260.7" stroke="#666" stroke-width=".6"/><path d="M523.8 266.1 L527.8 259.2" stroke="#666" stroke-width=".6"/><path d="M522.6 265.6 L525.3 258.0" stroke="#666" stroke-width=".6"/><path d="M522.0 261.3 L525.9 259.4 L523.5 264.8 Z" fill="#000"/><path d="M557.9 269.9 A15.5 15.5 0 0 0 544.0 257.2 L543.3 265.1 A7.5 7.5 0 0 1 550.0 271.3 Z" fill="none" stroke="#333" stroke-width=".9"/><path d="M553.9 270.6 A11.5 11.5 0 0 0 543.6 261.1" fill="none" stroke="#777" stroke-width=".6"/><path d="M549.5 269.7 L556.9 266.7" stroke="#666" stroke-width=".6"/><path d="M548.7 268.3 L555.3 263.7" stroke="#666" stroke-width=".6"/><path d="M547.7 267.1 L553.1 261.2" stroke="#666" stroke-width=".6"/><path d="M546.4 266.1 L550.4 259.2" stroke="#666" stroke-width=".6"/><path d="M544.9 265.4 L547.3 257.8" stroke="#666" stroke-width=".6"/><path d="M543.6 261.1 L547.3 258.9 L545.4 264.6 Z" fill="#000"/><rect x="859.5" y="257.5" width="18" height="15" fill="none" stroke="#444" stroke-width=".9"/><path d="M867 264.6 L875 260 L875 269Z" fill="#000"/><rect x="882.5" y="259.5" width="18" height="11" fill="none" stroke="#444" stroke-width=".9"/><path d="M882 264.6 L888 261 L888 268Z M900 264.6 L894 261 L894 268Z" fill="#000"/><rect x="905.5" y="257.5" width="16" height="15" fill="none" stroke="#444" stroke-width=".9"/><text x="907" y="269" font-size="10" font-weight="bold" font-family="Liberation Sans">P</text><path d="M914 264.6 L921 261 L921 268Z" fill="#000"/><rect x="930.5" y="259.5" width="14" height="11" fill="none" stroke="#444" stroke-width=".9"/><text x="933" y="269" font-size="9" font-weight="bold" font-family="Liberation Sans">P</text><path d="M928 264.6 L933 262 L933 267Z M946 264.6 L941 262 L941 267Z" fill="#000"/><rect x="336.5" y="289.5" width="16" height="9" fill="#f8c080" stroke="#a06020"/><path d="M340 294 h9 M340 292 v4 M349 292 v4" stroke="#805020" stroke-width=".9"/><path d="M363 301 L361 293 Q360 285 367 285 Q374 285 373 293 L371 301 Z" fill="#f8c080" stroke="#c09060" stroke-width=".7"/><rect x="381.3" y="291.3" width="17" height="7" fill="none" stroke="#444" stroke-width=".9"/><path d="M381.8 294.8 h10" stroke="#666" stroke-width=".7"/><path d="M391.8 292.3 L397.8 294.8 L391.8 297.3Z" fill="#000"/><rect x="404.5" y="291.3" width="17" height="7" fill="none" stroke="#444" stroke-width=".9"/><path d="M405 294.8 h10" stroke="#666" stroke-width=".7"/><path d="M415 292.3 L421 294.8 L415 297.3Z" fill="#000"/><rect x="427.5" y="291.3" width="17" height="7" fill="none" stroke="#444" stroke-width=".9"/><path d="M428 294.8 h10" stroke="#666" stroke-width=".7"/><path d="M438 292.3 L444 294.8 L438 297.3Z" fill="#000"/><rect x="450.5" y="290.8" width="16" height="8" fill="#ddd" stroke="#ccc"/><rect x="474.5" y="286.8" width="16" height="15" fill="#fff" stroke="#bbb"/><path d="M475 287 L490 302 M490 287 L475 302" stroke="#aaa" stroke-width=".8"/><rect x="497.5" y="286.8" width="16" height="15" fill="#fff" stroke="#555"/><path d="M498 302 L513 302 L513 292 Z" fill="#000"/><circle cx="546.5" cy="294.8" r="8" fill="#fff" stroke="#333" stroke-width="1.2"/><path d="M546.5 294.8 L554.5 294.8" stroke="#444" stroke-width=".8"/><path d="M546.5 294.8 L553.4 298.8" stroke="#444" stroke-width=".8"/><path d="M546.5 294.8 L550.5 301.7" stroke="#444" stroke-width=".8"/><path d="M546.5 294.8 L546.5 302.8" stroke="#444" stroke-width=".8"/><path d="M546.5 294.8 L542.5 301.7" stroke="#444" stroke-width=".8"/><path d="M546.5 294.8 L539.6 298.8" stroke="#444" stroke-width=".8"/><path d="M546.5 294.8 L538.5 294.8" stroke="#444" stroke-width=".8"/><path d="M546.5 294.8 L539.6 290.8" stroke="#444" stroke-width=".8"/><path d="M546.5 294.8 L542.5 287.9" stroke="#444" stroke-width=".8"/><path d="M546.5 294.8 L546.5 286.8" stroke="#444" stroke-width=".8"/><path d="M546.5 294.8 L550.5 287.9" stroke="#444" stroke-width=".8"/><path d="M546.5 294.8 L553.4 290.8" stroke="#444" stroke-width=".8"/><rect x="561.5" y="291.8" width="15" height="6" rx="2" fill="#fff" stroke="#999"/><rect x="607.0" y="287.3" width="6" height="15" fill="#fff" stroke="#333" stroke-width="1.2"/><rect x="624.9" y="287.3" width="15" height="15" fill="#fff" stroke="#333" stroke-width="1.2"/><rect x="627" y="288.8" width="11" height="11" fill="none" stroke="#555" stroke-width=".8"/><rect x="648.0" y="287.3" width="15" height="15" fill="#fff" stroke="#333" stroke-width="1.2"/><rect x="671.1" y="287.3" width="15" height="15" fill="#fff" stroke="#333" stroke-width="1.2"/><circle cx="675.1" cy="291.3" r="3" fill="none" stroke="#555" stroke-width=".8"/><circle cx="675.1" cy="298.3" r="3" fill="none" stroke="#555" stroke-width=".8"/><circle cx="682.1" cy="291.3" r="3" fill="none" stroke="#555" stroke-width=".8"/><circle cx="682.1" cy="298.3" r="3" fill="none" stroke="#555" stroke-width=".8"/><rect x="693.6" y="289.3" width="16" height="11" fill="#fff" stroke="#333" stroke-width="1.2"/><path d="M701.6 289.8 v11" stroke="#333"/><rect x="717.1" y="287.3" width="15" height="15" fill="#fff" stroke="#333" stroke-width="1.2"/><circle cx="724.6" cy="294.8" r="1.2" fill="#333"/><rect x="744" y="290.3" width="9" height="9" fill="#fff" stroke="#333"/><rect x="746" y="286.8" width="4" height="3" fill="#fff" stroke="#333" stroke-width=".8"/><rect x="746" y="299.8" width="4" height="3" fill="#fff" stroke="#333" stroke-width=".8"/><rect x="739" y="292.8" width="3" height="4" fill="#fff" stroke="#333" stroke-width=".8"/><rect x="755" y="292.8" width="3" height="4" fill="#fff" stroke="#333" stroke-width=".8"/><rect x="763.3" y="287.3" width="14" height="15" fill="#fff" stroke="#333" stroke-width="1.2"/><path d="M766 301.8 v-11 h8.6 v11" fill="none" stroke="#555" stroke-width=".8"/><rect x="785.9" y="289.8" width="15" height="10" fill="#fff" stroke="#333" stroke-width="1.2"/><path d="M793.4 290.8 v9" stroke="#555"/><rect x="808.8" y="290.8" width="15" height="8" fill="#fff" stroke="#333" stroke-width="1.2"/><path d="M811 291.8 v7 M816 291.8 v7 M821 291.8 v7" stroke="#555" stroke-width=".8"/><rect x="831.5" y="294.8" width="16" height="7" fill="#fff" stroke="#333"/><rect x="836.5" y="288.8" width="6" height="5" fill="#fff" stroke="#333"/><rect x="855.1" y="291.3" width="15" height="7" fill="#fff" stroke="#333" stroke-width="1.2"/><rect x="878.3" y="287.3" width="15" height="15" fill="#fff" stroke="#333" stroke-width="1.2"/><ellipse cx="909" cy="294.8" rx="8" ry="7" fill="#fff" stroke="#333" stroke-width="1.2"/><path d="M901 292.8 Q909 288.8 917 292.8" fill="none" stroke="#333"/><path d="M927 289.8 L928 301.8 L936 301.8 L937 289.8Z" fill="#fff" stroke="#333" stroke-width="1.1"/><rect x="926.5" y="286.8" width="11" height="4" fill="#fff" stroke="#333"/></svg>
<!-- /TB -->
  <div class="a" style="left:316px;top:313px;width:774px;height:678px;background:#fff"></div>
  <!-- PLAN -->
<svg class="a" style="left:0;top:0" width="1366" height="1117" viewBox="0 0 1366 1117"><defs><clipPath id="dc"><rect x="316" y="313" width="774" height="678"/></clipPath></defs><g clip-path="url(#dc)"><path d="M335 403h1.3v1.3h-1.3zM353 403h1.3v1.3h-1.3zM371 403h1.3v1.3h-1.3zM389 403h1.3v1.3h-1.3zM407 403h1.3v1.3h-1.3zM425 403h1.3v1.3h-1.3zM443 403h1.3v1.3h-1.3zM461 403h1.3v1.3h-1.3zM479 403h1.3v1.3h-1.3zM496 403h1.3v1.3h-1.3zM514 403h1.3v1.3h-1.3zM532 403h1.3v1.3h-1.3zM550 403h1.3v1.3h-1.3zM568 403h1.3v1.3h-1.3zM586 403h1.3v1.3h-1.3zM604 403h1.3v1.3h-1.3zM622 403h1.3v1.3h-1.3zM640 403h1.3v1.3h-1.3zM658 403h1.3v1.3h-1.3zM676 403h1.3v1.3h-1.3zM693 403h1.3v1.3h-1.3zM711 403h1.3v1.3h-1.3zM729 403h1.3v1.3h-1.3zM747 403h1.3v1.3h-1.3zM765 403h1.3v1.3h-1.3zM783 403h1.3v1.3h-1.3zM801 403h1.3v1.3h-1.3zM819 403h1.3v1.3h-1.3zM837 403h1.3v1.3h-1.3zM854 403h1.3v1.3h-1.3zM872 403h1.3v1.3h-1.3zM890 403h1.3v1.3h-1.3zM908 403h1.3v1.3h-1.3zM926 403h1.3v1.3h-1.3zM944 403h1.3v1.3h-1.3zM962 403h1.3v1.3h-1.3zM980 403h1.3v1.3h-1.3zM998 403h1.3v1.3h-1.3zM1016 403h1.3v1.3h-1.3zM1034 403h1.3v1.3h-1.3zM1051 403h1.3v1.3h-1.3zM1069 403h1.3v1.3h-1.3zM335 421h1.3v1.3h-1.3zM353 421h1.3v1.3h-1.3zM371 421h1.3v1.3h-1.3zM389 421h1.3v1.3h-1.3zM407 421h1.3v1.3h-1.3zM425 421h1.3v1.3h-1.3zM443 421h1.3v1.3h-1.3zM461 421h1.3v1.3h-1.3zM479 421h1.3v1.3h-1.3zM496 421h1.3v1.3h-1.3zM514 421h1.3v1.3h-1.3zM532 421h1.3v1.3h-1.3zM550 421h1.3v1.3h-1.3zM568 421h1.3v1.3h-1.3zM586 421h1.3v1.3h-1.3zM604 421h1.3v1.3h-1.3zM622 421h1.3v1.3h-1.3zM640 421h1.3v1.3h-1.3zM658 421h1.3v1.3h-1.3zM676 421h1.3v1.3h-1.3zM693 421h1.3v1.3h-1.3zM711 421h1.3v1.3h-1.3zM729 421h1.3v1.3h-1.3zM747 421h1.3v1.3h-1.3zM765 421h1.3v1.3h-1.3zM783 421h1.3v1.3h-1.3zM801 421h1.3v1.3h-1.3zM819 421h1.3v1.3h-1.3zM837 421h1.3v1.3h-1.3zM854 421h1.3v1.3h-1.3zM872 421h1.3v1.3h-1.3zM890 421h1.3v1.3h-1.3zM908 421h1.3v1.3h-1.3zM926 421h1.3v1.3h-1.3zM944 421h1.3v1.3h-1.3zM962 421h1.3v1.3h-1.3zM980 421h1.3v1.3h-1.3zM998 421h1.3v1.3h-1.3zM1016 421h1.3v1.3h-1.3zM1034 421h1.3v1.3h-1.3zM1051 421h1.3v1.3h-1.3zM1069 421h1.3v1.3h-1.3zM335 439h1.3v1.3h-1.3zM353 439h1.3v1.3h-1.3zM371 439h1.3v1.3h-1.3zM389 439h1.3v1.3h-1.3zM407 439h1.3v1.3h-1.3zM425 439h1.3v1.3h-1.3zM443 439h1.3v1.3h-1.3zM461 439h1.3v1.3h-1.3zM479 439h1.3v1.3h-1.3zM496 439h1.3v1.3h-1.3zM514 439h1.3v1.3h-1.3zM532 439h1.3v1.3h-1.3zM550 439h1.3v1.3h-1.3zM568 439h1.3v1.3h-1.3zM586 439h1.3v1.3h-1.3zM604 439h1.3v1.3h-1.3zM622 439h1.3v1.3h-1.3zM640 439h1.3v1.3h-1.3zM658 439h1.3v1.3h-1.3zM676 439h1.3v1.3h-1.3zM693 439h1.3v1.3h-1.3zM711 439h1.3v1.3h-1.3zM729 439h1.3v1.3h-1.3zM747 439h1.3v1.3h-1.3zM765 439h1.3v1.3h-1.3zM783 439h1.3v1.3h-1.3zM801 439h1.3v1.3h-1.3zM819 439h1.3v1.3h-1.3zM837 439h1.3v1.3h-1.3zM854 439h1.3v1.3h-1.3zM872 439h1.3v1.3h-1.3zM890 439h1.3v1.3h-1.3zM908 439h1.3v1.3h-1.3zM926 439h1.3v1.3h-1.3zM944 439h1.3v1.3h-1.3zM962 439h1.3v1.3h-1.3zM980 439h1.3v1.3h-1.3zM998 439h1.3v1.3h-1.3zM1016 439h1.3v1.3h-1.3zM1034 439h1.3v1.3h-1.3zM1051 439h1.3v1.3h-1.3zM1069 439h1.3v1.3h-1.3zM335 457h1.3v1.3h-1.3zM353 457h1.3v1.3h-1.3zM371 457h1.3v1.3h-1.3zM389 457h1.3v1.3h-1.3zM407 457h1.3v1.3h-1.3zM425 457h1.3v1.3h-1.3zM443 457h1.3v1.3h-1.3zM461 457h1.3v1.3h-1.3zM479 457h1.3v1.3h-1.3zM496 457h1.3v1.3h-1.3zM514 457h1.3v1.3h-1.3zM532 457h1.3v1.3h-1.3zM550 457h1.3v1.3h-1.3zM568 457h1.3v1.3h-1.3zM586 457h1.3v1.3h-1.3zM604 457h1.3v1.3h-1.3zM622 457h1.3v1.3h-1.3zM640 457h1.3v1.3h-1.3zM658 457h1.3v1.3h-1.3zM676 457h1.3v1.3h-1.3zM693 457h1.3v1.3h-1.3zM711 457h1.3v1.3h-1.3zM729 457h1.3v1.3h-1.3zM747 457h1.3v1.3h-1.3zM765 457h1.3v1.3h-1.3zM783 457h1.3v1.3h-1.3zM801 457h1.3v1.3h-1.3zM819 457h1.3v1.3h-1.3zM837 457h1.3v1.3h-1.3zM854 457h1.3v1.3h-1.3zM872 457h1.3v1.3h-1.3zM890 457h1.3v1.3h-1.3zM908 457h1.3v1.3h-1.3zM926 457h1.3v1.3h-1.3zM944 457h1.3v1.3h-1.3zM962 457h1.3v1.3h-1.3zM980 457h1.3v1.3h-1.3zM998 457h1.3v1.3h-1.3zM1016 457h1.3v1.3h-1.3zM1034 457h1.3v1.3h-1.3zM1051 457h1.3v1.3h-1.3zM1069 457h1.3v1.3h-1.3zM335 475h1.3v1.3h-1.3zM353 475h1.3v1.3h-1.3zM371 475h1.3v1.3h-1.3zM389 475h1.3v1.3h-1.3zM407 475h1.3v1.3h-1.3zM425 475h1.3v1.3h-1.3zM443 475h1.3v1.3h-1.3zM461 475h1.3v1.3h-1.3zM479 475h1.3v1.3h-1.3zM496 475h1.3v1.3h-1.3zM514 475h1.3v1.3h-1.3zM532 475h1.3v1.3h-1.3zM550 475h1.3v1.3h-1.3zM568 475h1.3v1.3h-1.3zM586 475h1.3v1.3h-1.3zM604 475h1.3v1.3h-1.3zM622 475h1.3v1.3h-1.3zM640 475h1.3v1.3h-1.3zM658 475h1.3v1.3h-1.3zM676 475h1.3v1.3h-1.3zM693 475h1.3v1.3h-1.3zM711 475h1.3v1.3h-1.3zM729 475h1.3v1.3h-1.3zM747 475h1.3v1.3h-1.3zM765 475h1.3v1.3h-1.3zM783 475h1.3v1.3h-1.3zM801 475h1.3v1.3h-1.3zM819 475h1.3v1.3h-1.3zM837 475h1.3v1.3h-1.3zM854 475h1.3v1.3h-1.3zM872 475h1.3v1.3h-1.3zM890 475h1.3v1.3h-1.3zM908 475h1.3v1.3h-1.3zM926 475h1.3v1.3h-1.3zM944 475h1.3v1.3h-1.3zM962 475h1.3v1.3h-1.3zM980 475h1.3v1.3h-1.3zM998 475h1.3v1.3h-1.3zM1016 475h1.3v1.3h-1.3zM1034 475h1.3v1.3h-1.3zM1051 475h1.3v1.3h-1.3zM1069 475h1.3v1.3h-1.3zM335 493h1.3v1.3h-1.3zM353 493h1.3v1.3h-1.3zM371 493h1.3v1.3h-1.3zM389 493h1.3v1.3h-1.3zM407 493h1.3v1.3h-1.3zM425 493h1.3v1.3h-1.3zM443 493h1.3v1.3h-1.3zM461 493h1.3v1.3h-1.3zM479 493h1.3v1.3h-1.3zM496 493h1.3v1.3h-1.3zM514 493h1.3v1.3h-1.3zM532 493h1.3v1.3h-1.3zM550 493h1.3v1.3h-1.3zM568 493h1.3v1.3h-1.3zM586 493h1.3v1.3h-1.3zM604 493h1.3v1.3h-1.3zM622 493h1.3v1.3h-1.3zM640 493h1.3v1.3h-1.3zM658 493h1.3v1.3h-1.3zM676 493h1.3v1.3h-1.3zM693 493h1.3v1.3h-1.3zM711 493h1.3v1.3h-1.3zM729 493h1.3v1.3h-1.3zM747 493h1.3v1.3h-1.3zM765 493h1.3v1.3h-1.3zM783 493h1.3v1.3h-1.3zM801 493h1.3v1.3h-1.3zM819 493h1.3v1.3h-1.3zM837 493h1.3v1.3h-1.3zM854 493h1.3v1.3h-1.3zM872 493h1.3v1.3h-1.3zM890 493h1.3v1.3h-1.3zM908 493h1.3v1.3h-1.3zM926 493h1.3v1.3h-1.3zM944 493h1.3v1.3h-1.3zM962 493h1.3v1.3h-1.3zM980 493h1.3v1.3h-1.3zM998 493h1.3v1.3h-1.3zM1016 493h1.3v1.3h-1.3zM1034 493h1.3v1.3h-1.3zM1051 493h1.3v1.3h-1.3zM1069 493h1.3v1.3h-1.3zM335 511h1.3v1.3h-1.3zM353 511h1.3v1.3h-1.3zM371 511h1.3v1.3h-1.3zM389 511h1.3v1.3h-1.3zM407 511h1.3v1.3h-1.3zM425 511h1.3v1.3h-1.3zM443 511h1.3v1.3h-1.3zM461 511h1.3v1.3h-1.3zM479 511h1.3v1.3h-1.3zM496 511h1.3v1.3h-1.3zM514 511h1.3v1.3h-1.3zM532 511h1.3v1.3h-1.3zM550 511h1.3v1.3h-1.3zM568 511h1.3v1.3h-1.3zM586 511h1.3v1.3h-1.3zM604 511h1.3v1.3h-1.3zM622 511h1.3v1.3h-1.3zM640 511h1.3v1.3h-1.3zM658 511h1.3v1.3h-1.3zM676 511h1.3v1.3h-1.3zM693 511h1.3v1.3h-1.3zM711 511h1.3v1.3h-1.3zM729 511h1.3v1.3h-1.3zM747 511h1.3v1.3h-1.3zM765 511h1.3v1.3h-1.3zM783 511h1.3v1.3h-1.3zM801 511h1.3v1.3h-1.3zM819 511h1.3v1.3h-1.3zM837 511h1.3v1.3h-1.3zM854 511h1.3v1.3h-1.3zM872 511h1.3v1.3h-1.3zM890 511h1.3v1.3h-1.3zM908 511h1.3v1.3h-1.3zM926 511h1.3v1.3h-1.3zM944 511h1.3v1.3h-1.3zM962 511h1.3v1.3h-1.3zM980 511h1.3v1.3h-1.3zM998 511h1.3v1.3h-1.3zM1016 511h1.3v1.3h-1.3zM1034 511h1.3v1.3h-1.3zM1051 511h1.3v1.3h-1.3zM1069 511h1.3v1.3h-1.3zM335 529h1.3v1.3h-1.3zM353 529h1.3v1.3h-1.3zM371 529h1.3v1.3h-1.3zM389 529h1.3v1.3h-1.3zM407 529h1.3v1.3h-1.3zM425 529h1.3v1.3h-1.3zM443 529h1.3v1.3h-1.3zM461 529h1.3v1.3h-1.3zM479 529h1.3v1.3h-1.3zM496 529h1.3v1.3h-1.3zM514 529h1.3v1.3h-1.3zM532 529h1.3v1.3h-1.3zM550 529h1.3v1.3h-1.3zM568 529h1.3v1.3h-1.3zM586 529h1.3v1.3h-1.3zM604 529h1.3v1.3h-1.3zM622 529h1.3v1.3h-1.3zM640 529h1.3v1.3h-1.3zM658 529h1.3v1.3h-1.3zM676 529h1.3v1.3h-1.3zM693 529h1.3v1.3h-1.3zM711 529h1.3v1.3h-1.3zM729 529h1.3v1.3h-1.3zM747 529h1.3v1.3h-1.3zM765 529h1.3v1.3h-1.3zM783 529h1.3v1.3h-1.3zM801 529h1.3v1.3h-1.3zM819 529h1.3v1.3h-1.3zM837 529h1.3v1.3h-1.3zM854 529h1.3v1.3h-1.3zM872 529h1.3v1.3h-1.3zM890 529h1.3v1.3h-1.3zM908 529h1.3v1.3h-1.3zM926 529h1.3v1.3h-1.3zM944 529h1.3v1.3h-1.3zM962 529h1.3v1.3h-1.3zM980 529h1.3v1.3h-1.3zM998 529h1.3v1.3h-1.3zM1016 529h1.3v1.3h-1.3zM1034 529h1.3v1.3h-1.3zM1051 529h1.3v1.3h-1.3zM1069 529h1.3v1.3h-1.3zM335 547h1.3v1.3h-1.3zM353 547h1.3v1.3h-1.3zM371 547h1.3v1.3h-1.3zM389 547h1.3v1.3h-1.3zM407 547h1.3v1.3h-1.3zM425 547h1.3v1.3h-1.3zM443 547h1.3v1.3h-1.3zM461 547h1.3v1.3h-1.3zM479 547h1.3v1.3h-1.3zM496 547h1.3v1.3h-1.3zM514 547h1.3v1.3h-1.3zM532 547h1.3v1.3h-1.3zM550 547h1.3v1.3h-1.3zM568 547h1.3v1.3h-1.3zM586 547h1.3v1.3h-1.3zM604 547h1.3v1.3h-1.3zM622 547h1.3v1.3h-1.3zM640 547h1.3v1.3h-1.3zM658 547h1.3v1.3h-1.3zM676 547h1.3v1.3h-1.3zM693 547h1.3v1.3h-1.3zM711 547h1.3v1.3h-1.3zM729 547h1.3v1.3h-1.3zM747 547h1.3v1.3h-1.3zM765 547h1.3v1.3h-1.3zM783 547h1.3v1.3h-1.3zM801 547h1.3v1.3h-1.3zM819 547h1.3v1.3h-1.3zM837 547h1.3v1.3h-1.3zM854 547h1.3v1.3h-1.3zM872 547h1.3v1.3h-1.3zM890 547h1.3v1.3h-1.3zM908 547h1.3v1.3h-1.3zM926 547h1.3v1.3h-1.3zM944 547h1.3v1.3h-1.3zM962 547h1.3v1.3h-1.3zM980 547h1.3v1.3h-1.3zM998 547h1.3v1.3h-1.3zM1016 547h1.3v1.3h-1.3zM1034 547h1.3v1.3h-1.3zM1051 547h1.3v1.3h-1.3zM1069 547h1.3v1.3h-1.3zM335 564h1.3v1.3h-1.3zM353 564h1.3v1.3h-1.3zM371 564h1.3v1.3h-1.3zM389 564h1.3v1.3h-1.3zM407 564h1.3v1.3h-1.3zM425 564h1.3v1.3h-1.3zM443 564h1.3v1.3h-1.3zM461 564h1.3v1.3h-1.3zM479 564h1.3v1.3h-1.3zM496 564h1.3v1.3h-1.3zM514 564h1.3v1.3h-1.3zM532 564h1.3v1.3h-1.3zM550 564h1.3v1.3h-1.3zM568 564h1.3v1.3h-1.3zM586 564h1.3v1.3h-1.3zM604 564h1.3v1.3h-1.3zM622 564h1.3v1.3h-1.3zM640 564h1.3v1.3h-1.3zM658 564h1.3v1.3h-1.3zM676 564h1.3v1.3h-1.3zM693 564h1.3v1.3h-1.3zM711 564h1.3v1.3h-1.3zM729 564h1.3v1.3h-1.3zM747 564h1.3v1.3h-1.3zM765 564h1.3v1.3h-1.3zM783 564h1.3v1.3h-1.3zM801 564h1.3v1.3h-1.3zM819 564h1.3v1.3h-1.3zM837 564h1.3v1.3h-1.3zM854 564h1.3v1.3h-1.3zM872 564h1.3v1.3h-1.3zM890 564h1.3v1.3h-1.3zM908 564h1.3v1.3h-1.3zM926 564h1.3v1.3h-1.3zM944 564h1.3v1.3h-1.3zM962 564h1.3v1.3h-1.3zM980 564h1.3v1.3h-1.3zM998 564h1.3v1.3h-1.3zM1016 564h1.3v1.3h-1.3zM1034 564h1.3v1.3h-1.3zM1051 564h1.3v1.3h-1.3zM1069 564h1.3v1.3h-1.3zM335 582h1.3v1.3h-1.3zM353 582h1.3v1.3h-1.3zM371 582h1.3v1.3h-1.3zM389 582h1.3v1.3h-1.3zM407 582h1.3v1.3h-1.3zM425 582h1.3v1.3h-1.3zM443 582h1.3v1.3h-1.3zM461 582h1.3v1.3h-1.3zM479 582h1.3v1.3h-1.3zM496 582h1.3v1.3h-1.3zM514 582h1.3v1.3h-1.3zM532 582h1.3v1.3h-1.3zM550 582h1.3v1.3h-1.3zM568 582h1.3v1.3h-1.3zM586 582h1.3v1.3h-1.3zM604 582h1.3v1.3h-1.3zM622 582h1.3v1.3h-1.3zM640 582h1.3v1.3h-1.3zM658 582h1.3v1.3h-1.3zM676 582h1.3v1.3h-1.3zM693 582h1.3v1.3h-1.3zM711 582h1.3v1.3h-1.3zM729 582h1.3v1.3h-1.3zM747 582h1.3v1.3h-1.3zM765 582h1.3v1.3h-1.3zM783 582h1.3v1.3h-1.3zM801 582h1.3v1.3h-1.3zM819 582h1.3v1.3h-1.3zM837 582h1.3v1.3h-1.3zM854 582h1.3v1.3h-1.3zM872 582h1.3v1.3h-1.3zM890 582h1.3v1.3h-1.3zM908 582h1.3v1.3h-1.3zM926 582h1.3v1.3h-1.3zM944 582h1.3v1.3h-1.3zM962 582h1.3v1.3h-1.3zM980 582h1.3v1.3h-1.3zM998 582h1.3v1.3h-1.3zM1016 582h1.3v1.3h-1.3zM1034 582h1.3v1.3h-1.3zM1051 582h1.3v1.3h-1.3zM1069 582h1.3v1.3h-1.3zM335 600h1.3v1.3h-1.3zM353 600h1.3v1.3h-1.3zM371 600h1.3v1.3h-1.3zM389 600h1.3v1.3h-1.3zM407 600h1.3v1.3h-1.3zM425 600h1.3v1.3h-1.3zM443 600h1.3v1.3h-1.3zM461 600h1.3v1.3h-1.3zM479 600h1.3v1.3h-1.3zM496 600h1.3v1.3h-1.3zM514 600h1.3v1.3h-1.3zM532 600h1.3v1.3h-1.3zM550 600h1.3v1.3h-1.3zM568 600h1.3v1.3h-1.3zM586 600h1.3v1.3h-1.3zM604 600h1.3v1.3h-1.3zM622 600h1.3v1.3h-1.3zM640 600h1.3v1.3h-1.3zM658 600h1.3v1.3h-1.3zM676 600h1.3v1.3h-1.3zM693 600h1.3v1.3h-1.3zM711 600h1.3v1.3h-1.3zM729 600h1.3v1.3h-1.3zM747 600h1.3v1.3h-1.3zM765 600h1.3v1.3h-1.3zM783 600h1.3v1.3h-1.3zM801 600h1.3v1.3h-1.3zM819 600h1.3v1.3h-1.3zM837 600h1.3v1.3h-1.3zM854 600h1.3v1.3h-1.3zM872 600h1.3v1.3h-1.3zM890 600h1.3v1.3h-1.3zM908 600h1.3v1.3h-1.3zM926 600h1.3v1.3h-1.3zM944 600h1.3v1.3h-1.3zM962 600h1.3v1.3h-1.3zM980 600h1.3v1.3h-1.3zM998 600h1.3v1.3h-1.3zM1016 600h1.3v1.3h-1.3zM1034 600h1.3v1.3h-1.3zM1051 600h1.3v1.3h-1.3zM1069 600h1.3v1.3h-1.3zM335 618h1.3v1.3h-1.3zM353 618h1.3v1.3h-1.3zM371 618h1.3v1.3h-1.3zM389 618h1.3v1.3h-1.3zM407 618h1.3v1.3h-1.3zM425 618h1.3v1.3h-1.3zM443 618h1.3v1.3h-1.3zM461 618h1.3v1.3h-1.3zM479 618h1.3v1.3h-1.3zM496 618h1.3v1.3h-1.3zM514 618h1.3v1.3h-1.3zM532 618h1.3v1.3h-1.3zM550 618h1.3v1.3h-1.3zM568 618h1.3v1.3h-1.3zM586 618h1.3v1.3h-1.3zM604 618h1.3v1.3h-1.3zM622 618h1.3v1.3h-1.3zM640 618h1.3v1.3h-1.3zM658 618h1.3v1.3h-1.3zM676 618h1.3v1.3h-1.3zM693 618h1.3v1.3h-1.3zM711 618h1.3v1.3h-1.3zM729 618h1.3v1.3h-1.3zM747 618h1.3v1.3h-1.3zM765 618h1.3v1.3h-1.3zM783 618h1.3v1.3h-1.3zM801 618h1.3v1.3h-1.3zM819 618h1.3v1.3h-1.3zM837 618h1.3v1.3h-1.3zM854 618h1.3v1.3h-1.3zM872 618h1.3v1.3h-1.3zM890 618h1.3v1.3h-1.3zM908 618h1.3v1.3h-1.3zM926 618h1.3v1.3h-1.3zM944 618h1.3v1.3h-1.3zM962 618h1.3v1.3h-1.3zM980 618h1.3v1.3h-1.3zM998 618h1.3v1.3h-1.3zM1016 618h1.3v1.3h-1.3zM1034 618h1.3v1.3h-1.3zM1051 618h1.3v1.3h-1.3zM1069 618h1.3v1.3h-1.3zM335 636h1.3v1.3h-1.3zM353 636h1.3v1.3h-1.3zM371 636h1.3v1.3h-1.3zM389 636h1.3v1.3h-1.3zM407 636h1.3v1.3h-1.3zM425 636h1.3v1.3h-1.3zM443 636h1.3v1.3h-1.3zM461 636h1.3v1.3h-1.3zM479 636h1.3v1.3h-1.3zM496 636h1.3v1.3h-1.3zM514 636h1.3v1.3h-1.3zM532 636h1.3v1.3h-1.3zM550 636h1.3v1.3h-1.3zM568 636h1.3v1.3h-1.3zM586 636h1.3v1.3h-1.3zM604 636h1.3v1.3h-1.3zM622 636h1.3v1.3h-1.3zM640 636h1.3v1.3h-1.3zM658 636h1.3v1.3h-1.3zM676 636h1.3v1.3h-1.3zM693 636h1.3v1.3h-1.3zM711 636h1.3v1.3h-1.3zM729 636h1.3v1.3h-1.3zM747 636h1.3v1.3h-1.3zM765 636h1.3v1.3h-1.3zM783 636h1.3v1.3h-1.3zM801 636h1.3v1.3h-1.3zM819 636h1.3v1.3h-1.3zM837 636h1.3v1.3h-1.3zM854 636h1.3v1.3h-1.3zM872 636h1.3v1.3h-1.3zM890 636h1.3v1.3h-1.3zM908 636h1.3v1.3h-1.3zM926 636h1.3v1.3h-1.3zM944 636h1.3v1.3h-1.3zM962 636h1.3v1.3h-1.3zM980 636h1.3v1.3h-1.3zM998 636h1.3v1.3h-1.3zM1016 636h1.3v1.3h-1.3zM1034 636h1.3v1.3h-1.3zM1051 636h1.3v1.3h-1.3zM1069 636h1.3v1.3h-1.3zM335 654h1.3v1.3h-1.3zM353 654h1.3v1.3h-1.3zM371 654h1.3v1.3h-1.3zM389 654h1.3v1.3h-1.3zM407 654h1.3v1.3h-1.3zM425 654h1.3v1.3h-1.3zM443 654h1.3v1.3h-1.3zM461 654h1.3v1.3h-1.3zM479 654h1.3v1.3h-1.3zM496 654h1.3v1.3h-1.3zM514 654h1.3v1.3h-1.3zM532 654h1.3v1.3h-1.3zM550 654h1.3v1.3h-1.3zM568 654h1.3v1.3h-1.3zM586 654h1.3v1.3h-1.3zM604 654h1.3v1.3h-1.3zM622 654h1.3v1.3h-1.3zM640 654h1.3v1.3h-1.3zM658 654h1.3v1.3h-1.3zM676 654h1.3v1.3h-1.3zM693 654h1.3v1.3h-1.3zM711 654h1.3v1.3h-1.3zM729 654h1.3v1.3h-1.3zM747 654h1.3v1.3h-1.3zM765 654h1.3v1.3h-1.3zM783 654h1.3v1.3h-1.3zM801 654h1.3v1.3h-1.3zM819 654h1.3v1.3h-1.3zM837 654h1.3v1.3h-1.3zM854 654h1.3v1.3h-1.3zM872 654h1.3v1.3h-1.3zM890 654h1.3v1.3h-1.3zM908 654h1.3v1.3h-1.3zM926 654h1.3v1.3h-1.3zM944 654h1.3v1.3h-1.3zM962 654h1.3v1.3h-1.3zM980 654h1.3v1.3h-1.3zM998 654h1.3v1.3h-1.3zM1016 654h1.3v1.3h-1.3zM1034 654h1.3v1.3h-1.3zM1051 654h1.3v1.3h-1.3zM1069 654h1.3v1.3h-1.3zM335 672h1.3v1.3h-1.3zM353 672h1.3v1.3h-1.3zM371 672h1.3v1.3h-1.3zM389 672h1.3v1.3h-1.3zM407 672h1.3v1.3h-1.3zM425 672h1.3v1.3h-1.3zM443 672h1.3v1.3h-1.3zM461 672h1.3v1.3h-1.3zM479 672h1.3v1.3h-1.3zM496 672h1.3v1.3h-1.3zM514 672h1.3v1.3h-1.3zM532 672h1.3v1.3h-1.3zM550 672h1.3v1.3h-1.3zM568 672h1.3v1.3h-1.3zM586 672h1.3v1.3h-1.3zM604 672h1.3v1.3h-1.3zM622 672h1.3v1.3h-1.3zM640 672h1.3v1.3h-1.3zM658 672h1.3v1.3h-1.3zM676 672h1.3v1.3h-1.3zM693 672h1.3v1.3h-1.3zM711 672h1.3v1.3h-1.3zM729 672h1.3v1.3h-1.3zM747 672h1.3v1.3h-1.3zM765 672h1.3v1.3h-1.3zM783 672h1.3v1.3h-1.3zM801 672h1.3v1.3h-1.3zM819 672h1.3v1.3h-1.3zM837 672h1.3v1.3h-1.3zM854 672h1.3v1.3h-1.3zM872 672h1.3v1.3h-1.3zM890 672h1.3v1.3h-1.3zM908 672h1.3v1.3h-1.3zM926 672h1.3v1.3h-1.3zM944 672h1.3v1.3h-1.3zM962 672h1.3v1.3h-1.3zM980 672h1.3v1.3h-1.3zM998 672h1.3v1.3h-1.3zM1016 672h1.3v1.3h-1.3zM1034 672h1.3v1.3h-1.3zM1051 672h1.3v1.3h-1.3zM1069 672h1.3v1.3h-1.3zM335 690h1.3v1.3h-1.3zM353 690h1.3v1.3h-1.3zM371 690h1.3v1.3h-1.3zM389 690h1.3v1.3h-1.3zM407 690h1.3v1.3h-1.3zM425 690h1.3v1.3h-1.3zM443 690h1.3v1.3h-1.3zM461 690h1.3v1.3h-1.3zM479 690h1.3v1.3h-1.3zM496 690h1.3v1.3h-1.3zM514 690h1.3v1.3h-1.3zM532 690h1.3v1.3h-1.3zM550 690h1.3v1.3h-1.3zM568 690h1.3v1.3h-1.3zM586 690h1.3v1.3h-1.3zM604 690h1.3v1.3h-1.3zM622 690h1.3v1.3h-1.3zM640 690h1.3v1.3h-1.3zM658 690h1.3v1.3h-1.3zM676 690h1.3v1.3h-1.3zM693 690h1.3v1.3h-1.3zM711 690h1.3v1.3h-1.3zM729 690h1.3v1.3h-1.3zM747 690h1.3v1.3h-1.3zM765 690h1.3v1.3h-1.3zM783 690h1.3v1.3h-1.3zM801 690h1.3v1.3h-1.3zM819 690h1.3v1.3h-1.3zM837 690h1.3v1.3h-1.3zM854 690h1.3v1.3h-1.3zM872 690h1.3v1.3h-1.3zM890 690h1.3v1.3h-1.3zM908 690h1.3v1.3h-1.3zM926 690h1.3v1.3h-1.3zM944 690h1.3v1.3h-1.3zM962 690h1.3v1.3h-1.3zM980 690h1.3v1.3h-1.3zM998 690h1.3v1.3h-1.3zM1016 690h1.3v1.3h-1.3zM1034 690h1.3v1.3h-1.3zM1051 690h1.3v1.3h-1.3zM1069 690h1.3v1.3h-1.3zM335 708h1.3v1.3h-1.3zM353 708h1.3v1.3h-1.3zM371 708h1.3v1.3h-1.3zM389 708h1.3v1.3h-1.3zM407 708h1.3v1.3h-1.3zM425 708h1.3v1.3h-1.3zM443 708h1.3v1.3h-1.3zM461 708h1.3v1.3h-1.3zM479 708h1.3v1.3h-1.3zM496 708h1.3v1.3h-1.3zM514 708h1.3v1.3h-1.3zM532 708h1.3v1.3h-1.3zM550 708h1.3v1.3h-1.3zM568 708h1.3v1.3h-1.3zM586 708h1.3v1.3h-1.3zM604 708h1.3v1.3h-1.3zM622 708h1.3v1.3h-1.3zM640 708h1.3v1.3h-1.3zM658 708h1.3v1.3h-1.3zM676 708h1.3v1.3h-1.3zM693 708h1.3v1.3h-1.3zM711 708h1.3v1.3h-1.3zM729 708h1.3v1.3h-1.3zM747 708h1.3v1.3h-1.3zM765 708h1.3v1.3h-1.3zM783 708h1.3v1.3h-1.3zM801 708h1.3v1.3h-1.3zM819 708h1.3v1.3h-1.3zM837 708h1.3v1.3h-1.3zM854 708h1.3v1.3h-1.3zM872 708h1.3v1.3h-1.3zM890 708h1.3v1.3h-1.3zM908 708h1.3v1.3h-1.3zM926 708h1.3v1.3h-1.3zM944 708h1.3v1.3h-1.3zM962 708h1.3v1.3h-1.3zM980 708h1.3v1.3h-1.3zM998 708h1.3v1.3h-1.3zM1016 708h1.3v1.3h-1.3zM1034 708h1.3v1.3h-1.3zM1051 708h1.3v1.3h-1.3zM1069 708h1.3v1.3h-1.3zM335 726h1.3v1.3h-1.3zM353 726h1.3v1.3h-1.3zM371 726h1.3v1.3h-1.3zM389 726h1.3v1.3h-1.3zM407 726h1.3v1.3h-1.3zM425 726h1.3v1.3h-1.3zM443 726h1.3v1.3h-1.3zM461 726h1.3v1.3h-1.3zM479 726h1.3v1.3h-1.3zM496 726h1.3v1.3h-1.3zM514 726h1.3v1.3h-1.3zM532 726h1.3v1.3h-1.3zM550 726h1.3v1.3h-1.3zM568 726h1.3v1.3h-1.3zM586 726h1.3v1.3h-1.3zM604 726h1.3v1.3h-1.3zM622 726h1.3v1.3h-1.3zM640 726h1.3v1.3h-1.3zM658 726h1.3v1.3h-1.3zM676 726h1.3v1.3h-1.3zM693 726h1.3v1.3h-1.3zM711 726h1.3v1.3h-1.3zM729 726h1.3v1.3h-1.3zM747 726h1.3v1.3h-1.3zM765 726h1.3v1.3h-1.3zM783 726h1.3v1.3h-1.3zM801 726h1.3v1.3h-1.3zM819 726h1.3v1.3h-1.3zM837 726h1.3v1.3h-1.3zM854 726h1.3v1.3h-1.3zM872 726h1.3v1.3h-1.3zM890 726h1.3v1.3h-1.3zM908 726h1.3v1.3h-1.3zM926 726h1.3v1.3h-1.3zM944 726h1.3v1.3h-1.3zM962 726h1.3v1.3h-1.3zM980 726h1.3v1.3h-1.3zM998 726h1.3v1.3h-1.3zM1016 726h1.3v1.3h-1.3zM1034 726h1.3v1.3h-1.3zM1051 726h1.3v1.3h-1.3zM1069 726h1.3v1.3h-1.3zM335 744h1.3v1.3h-1.3zM353 744h1.3v1.3h-1.3zM371 744h1.3v1.3h-1.3zM389 744h1.3v1.3h-1.3zM407 744h1.3v1.3h-1.3zM425 744h1.3v1.3h-1.3zM443 744h1.3v1.3h-1.3zM461 744h1.3v1.3h-1.3zM479 744h1.3v1.3h-1.3zM496 744h1.3v1.3h-1.3zM514 744h1.3v1.3h-1.3zM532 744h1.3v1.3h-1.3zM550 744h1.3v1.3h-1.3zM568 744h1.3v1.3h-1.3zM586 744h1.3v1.3h-1.3zM604 744h1.3v1.3h-1.3zM622 744h1.3v1.3h-1.3zM640 744h1.3v1.3h-1.3zM658 744h1.3v1.3h-1.3zM676 744h1.3v1.3h-1.3zM693 744h1.3v1.3h-1.3zM711 744h1.3v1.3h-1.3zM729 744h1.3v1.3h-1.3zM747 744h1.3v1.3h-1.3zM765 744h1.3v1.3h-1.3zM783 744h1.3v1.3h-1.3zM801 744h1.3v1.3h-1.3zM819 744h1.3v1.3h-1.3zM837 744h1.3v1.3h-1.3zM854 744h1.3v1.3h-1.3zM872 744h1.3v1.3h-1.3zM890 744h1.3v1.3h-1.3zM908 744h1.3v1.3h-1.3zM926 744h1.3v1.3h-1.3zM944 744h1.3v1.3h-1.3zM962 744h1.3v1.3h-1.3zM980 744h1.3v1.3h-1.3zM998 744h1.3v1.3h-1.3zM1016 744h1.3v1.3h-1.3zM1034 744h1.3v1.3h-1.3zM1051 744h1.3v1.3h-1.3zM1069 744h1.3v1.3h-1.3zM335 761h1.3v1.3h-1.3zM353 761h1.3v1.3h-1.3zM371 761h1.3v1.3h-1.3zM389 761h1.3v1.3h-1.3zM407 761h1.3v1.3h-1.3zM425 761h1.3v1.3h-1.3zM443 761h1.3v1.3h-1.3zM461 761h1.3v1.3h-1.3zM479 761h1.3v1.3h-1.3zM496 761h1.3v1.3h-1.3zM514 761h1.3v1.3h-1.3zM532 761h1.3v1.3h-1.3zM550 761h1.3v1.3h-1.3zM568 761h1.3v1.3h-1.3zM586 761h1.3v1.3h-1.3zM604 761h1.3v1.3h-1.3zM622 761h1.3v1.3h-1.3zM640 761h1.3v1.3h-1.3zM658 761h1.3v1.3h-1.3zM676 761h1.3v1.3h-1.3zM693 761h1.3v1.3h-1.3zM711 761h1.3v1.3h-1.3zM729 761h1.3v1.3h-1.3zM747 761h1.3v1.3h-1.3zM765 761h1.3v1.3h-1.3zM783 761h1.3v1.3h-1.3zM801 761h1.3v1.3h-1.3zM819 761h1.3v1.3h-1.3zM837 761h1.3v1.3h-1.3zM854 761h1.3v1.3h-1.3zM872 761h1.3v1.3h-1.3zM890 761h1.3v1.3h-1.3zM908 761h1.3v1.3h-1.3zM926 761h1.3v1.3h-1.3zM944 761h1.3v1.3h-1.3zM962 761h1.3v1.3h-1.3zM980 761h1.3v1.3h-1.3zM998 761h1.3v1.3h-1.3zM1016 761h1.3v1.3h-1.3zM1034 761h1.3v1.3h-1.3zM1051 761h1.3v1.3h-1.3zM1069 761h1.3v1.3h-1.3zM335 779h1.3v1.3h-1.3zM353 779h1.3v1.3h-1.3zM371 779h1.3v1.3h-1.3zM389 779h1.3v1.3h-1.3zM407 779h1.3v1.3h-1.3zM425 779h1.3v1.3h-1.3zM443 779h1.3v1.3h-1.3zM461 779h1.3v1.3h-1.3zM479 779h1.3v1.3h-1.3zM496 779h1.3v1.3h-1.3zM514 779h1.3v1.3h-1.3zM532 779h1.3v1.3h-1.3zM550 779h1.3v1.3h-1.3zM568 779h1.3v1.3h-1.3zM586 779h1.3v1.3h-1.3zM604 779h1.3v1.3h-1.3zM622 779h1.3v1.3h-1.3zM640 779h1.3v1.3h-1.3zM658 779h1.3v1.3h-1.3zM676 779h1.3v1.3h-1.3zM693 779h1.3v1.3h-1.3zM711 779h1.3v1.3h-1.3zM729 779h1.3v1.3h-1.3zM747 779h1.3v1.3h-1.3zM765 779h1.3v1.3h-1.3zM783 779h1.3v1.3h-1.3zM801 779h1.3v1.3h-1.3zM819 779h1.3v1.3h-1.3zM837 779h1.3v1.3h-1.3zM854 779h1.3v1.3h-1.3zM872 779h1.3v1.3h-1.3zM890 779h1.3v1.3h-1.3zM908 779h1.3v1.3h-1.3zM926 779h1.3v1.3h-1.3zM944 779h1.3v1.3h-1.3zM962 779h1.3v1.3h-1.3zM980 779h1.3v1.3h-1.3zM998 779h1.3v1.3h-1.3zM1016 779h1.3v1.3h-1.3zM1034 779h1.3v1.3h-1.3zM1051 779h1.3v1.3h-1.3zM1069 779h1.3v1.3h-1.3zM335 797h1.3v1.3h-1.3zM353 797h1.3v1.3h-1.3zM371 797h1.3v1.3h-1.3zM389 797h1.3v1.3h-1.3zM407 797h1.3v1.3h-1.3zM425 797h1.3v1.3h-1.3zM443 797h1.3v1.3h-1.3zM461 797h1.3v1.3h-1.3zM479 797h1.3v1.3h-1.3zM496 797h1.3v1.3h-1.3zM514 797h1.3v1.3h-1.3zM532 797h1.3v1.3h-1.3zM550 797h1.3v1.3h-1.3zM568 797h1.3v1.3h-1.3zM586 797h1.3v1.3h-1.3zM604 797h1.3v1.3h-1.3zM622 797h1.3v1.3h-1.3zM640 797h1.3v1.3h-1.3zM658 797h1.3v1.3h-1.3zM676 797h1.3v1.3h-1.3zM693 797h1.3v1.3h-1.3zM711 797h1.3v1.3h-1.3zM729 797h1.3v1.3h-1.3zM747 797h1.3v1.3h-1.3zM765 797h1.3v1.3h-1.3zM783 797h1.3v1.3h-1.3zM801 797h1.3v1.3h-1.3zM819 797h1.3v1.3h-1.3zM837 797h1.3v1.3h-1.3zM854 797h1.3v1.3h-1.3zM872 797h1.3v1.3h-1.3zM890 797h1.3v1.3h-1.3zM908 797h1.3v1.3h-1.3zM926 797h1.3v1.3h-1.3zM944 797h1.3v1.3h-1.3zM962 797h1.3v1.3h-1.3zM980 797h1.3v1.3h-1.3zM998 797h1.3v1.3h-1.3zM1016 797h1.3v1.3h-1.3zM1034 797h1.3v1.3h-1.3zM1051 797h1.3v1.3h-1.3zM1069 797h1.3v1.3h-1.3zM335 815h1.3v1.3h-1.3zM353 815h1.3v1.3h-1.3zM371 815h1.3v1.3h-1.3zM389 815h1.3v1.3h-1.3zM407 815h1.3v1.3h-1.3zM425 815h1.3v1.3h-1.3zM443 815h1.3v1.3h-1.3zM461 815h1.3v1.3h-1.3zM479 815h1.3v1.3h-1.3zM496 815h1.3v1.3h-1.3zM514 815h1.3v1.3h-1.3zM532 815h1.3v1.3h-1.3zM550 815h1.3v1.3h-1.3zM568 815h1.3v1.3h-1.3zM586 815h1.3v1.3h-1.3zM604 815h1.3v1.3h-1.3zM622 815h1.3v1.3h-1.3zM640 815h1.3v1.3h-1.3zM658 815h1.3v1.3h-1.3zM676 815h1.3v1.3h-1.3zM693 815h1.3v1.3h-1.3zM711 815h1.3v1.3h-1.3zM729 815h1.3v1.3h-1.3zM747 815h1.3v1.3h-1.3zM765 815h1.3v1.3h-1.3zM783 815h1.3v1.3h-1.3zM801 815h1.3v1.3h-1.3zM819 815h1.3v1.3h-1.3zM837 815h1.3v1.3h-1.3zM854 815h1.3v1.3h-1.3zM872 815h1.3v1.3h-1.3zM890 815h1.3v1.3h-1.3zM908 815h1.3v1.3h-1.3zM926 815h1.3v1.3h-1.3zM944 815h1.3v1.3h-1.3zM962 815h1.3v1.3h-1.3zM980 815h1.3v1.3h-1.3zM998 815h1.3v1.3h-1.3zM1016 815h1.3v1.3h-1.3zM1034 815h1.3v1.3h-1.3zM1051 815h1.3v1.3h-1.3zM1069 815h1.3v1.3h-1.3zM335 833h1.3v1.3h-1.3zM353 833h1.3v1.3h-1.3zM371 833h1.3v1.3h-1.3zM389 833h1.3v1.3h-1.3zM407 833h1.3v1.3h-1.3zM425 833h1.3v1.3h-1.3zM443 833h1.3v1.3h-1.3zM461 833h1.3v1.3h-1.3zM479 833h1.3v1.3h-1.3zM496 833h1.3v1.3h-1.3zM514 833h1.3v1.3h-1.3zM532 833h1.3v1.3h-1.3zM550 833h1.3v1.3h-1.3zM568 833h1.3v1.3h-1.3zM586 833h1.3v1.3h-1.3zM604 833h1.3v1.3h-1.3zM622 833h1.3v1.3h-1.3zM640 833h1.3v1.3h-1.3zM658 833h1.3v1.3h-1.3zM676 833h1.3v1.3h-1.3zM693 833h1.3v1.3h-1.3zM711 833h1.3v1.3h-1.3zM729 833h1.3v1.3h-1.3zM747 833h1.3v1.3h-1.3zM765 833h1.3v1.3h-1.3zM783 833h1.3v1.3h-1.3zM801 833h1.3v1.3h-1.3zM819 833h1.3v1.3h-1.3zM837 833h1.3v1.3h-1.3zM854 833h1.3v1.3h-1.3zM872 833h1.3v1.3h-1.3zM890 833h1.3v1.3h-1.3zM908 833h1.3v1.3h-1.3zM926 833h1.3v1.3h-1.3zM944 833h1.3v1.3h-1.3zM962 833h1.3v1.3h-1.3zM980 833h1.3v1.3h-1.3zM998 833h1.3v1.3h-1.3zM1016 833h1.3v1.3h-1.3zM1034 833h1.3v1.3h-1.3zM1051 833h1.3v1.3h-1.3zM1069 833h1.3v1.3h-1.3zM335 851h1.3v1.3h-1.3zM353 851h1.3v1.3h-1.3zM371 851h1.3v1.3h-1.3zM389 851h1.3v1.3h-1.3zM407 851h1.3v1.3h-1.3zM425 851h1.3v1.3h-1.3zM443 851h1.3v1.3h-1.3zM461 851h1.3v1.3h-1.3zM479 851h1.3v1.3h-1.3zM496 851h1.3v1.3h-1.3zM514 851h1.3v1.3h-1.3zM532 851h1.3v1.3h-1.3zM550 851h1.3v1.3h-1.3zM568 851h1.3v1.3h-1.3zM586 851h1.3v1.3h-1.3zM604 851h1.3v1.3h-1.3zM622 851h1.3v1.3h-1.3zM640 851h1.3v1.3h-1.3zM658 851h1.3v1.3h-1.3zM676 851h1.3v1.3h-1.3zM693 851h1.3v1.3h-1.3zM711 851h1.3v1.3h-1.3zM729 851h1.3v1.3h-1.3zM747 851h1.3v1.3h-1.3zM765 851h1.3v1.3h-1.3zM783 851h1.3v1.3h-1.3zM801 851h1.3v1.3h-1.3zM819 851h1.3v1.3h-1.3zM837 851h1.3v1.3h-1.3zM854 851h1.3v1.3h-1.3zM872 851h1.3v1.3h-1.3zM890 851h1.3v1.3h-1.3zM908 851h1.3v1.3h-1.3zM926 851h1.3v1.3h-1.3zM944 851h1.3v1.3h-1.3zM962 851h1.3v1.3h-1.3zM980 851h1.3v1.3h-1.3zM998 851h1.3v1.3h-1.3zM1016 851h1.3v1.3h-1.3zM1034 851h1.3v1.3h-1.3zM1051 851h1.3v1.3h-1.3zM1069 851h1.3v1.3h-1.3zM335 869h1.3v1.3h-1.3zM353 869h1.3v1.3h-1.3zM371 869h1.3v1.3h-1.3zM389 869h1.3v1.3h-1.3zM407 869h1.3v1.3h-1.3zM425 869h1.3v1.3h-1.3zM443 869h1.3v1.3h-1.3zM461 869h1.3v1.3h-1.3zM479 869h1.3v1.3h-1.3zM496 869h1.3v1.3h-1.3zM514 869h1.3v1.3h-1.3zM532 869h1.3v1.3h-1.3zM550 869h1.3v1.3h-1.3zM568 869h1.3v1.3h-1.3zM586 869h1.3v1.3h-1.3zM604 869h1.3v1.3h-1.3zM622 869h1.3v1.3h-1.3zM640 869h1.3v1.3h-1.3zM658 869h1.3v1.3h-1.3zM676 869h1.3v1.3h-1.3zM693 869h1.3v1.3h-1.3zM711 869h1.3v1.3h-1.3zM729 869h1.3v1.3h-1.3zM747 869h1.3v1.3h-1.3zM765 869h1.3v1.3h-1.3zM783 869h1.3v1.3h-1.3zM801 869h1.3v1.3h-1.3zM819 869h1.3v1.3h-1.3zM837 869h1.3v1.3h-1.3zM854 869h1.3v1.3h-1.3zM872 869h1.3v1.3h-1.3zM890 869h1.3v1.3h-1.3zM908 869h1.3v1.3h-1.3zM926 869h1.3v1.3h-1.3zM944 869h1.3v1.3h-1.3zM962 869h1.3v1.3h-1.3zM980 869h1.3v1.3h-1.3zM998 869h1.3v1.3h-1.3zM1016 869h1.3v1.3h-1.3zM1034 869h1.3v1.3h-1.3zM1051 869h1.3v1.3h-1.3zM1069 869h1.3v1.3h-1.3zM335 887h1.3v1.3h-1.3zM353 887h1.3v1.3h-1.3zM371 887h1.3v1.3h-1.3zM389 887h1.3v1.3h-1.3zM407 887h1.3v1.3h-1.3zM425 887h1.3v1.3h-1.3zM443 887h1.3v1.3h-1.3zM461 887h1.3v1.3h-1.3zM479 887h1.3v1.3h-1.3zM496 887h1.3v1.3h-1.3zM514 887h1.3v1.3h-1.3zM532 887h1.3v1.3h-1.3zM550 887h1.3v1.3h-1.3zM568 887h1.3v1.3h-1.3zM586 887h1.3v1.3h-1.3zM604 887h1.3v1.3h-1.3zM622 887h1.3v1.3h-1.3zM640 887h1.3v1.3h-1.3zM658 887h1.3v1.3h-1.3zM676 887h1.3v1.3h-1.3zM693 887h1.3v1.3h-1.3zM711 887h1.3v1.3h-1.3zM729 887h1.3v1.3h-1.3zM747 887h1.3v1.3h-1.3zM765 887h1.3v1.3h-1.3zM783 887h1.3v1.3h-1.3zM801 887h1.3v1.3h-1.3zM819 887h1.3v1.3h-1.3zM837 887h1.3v1.3h-1.3zM854 887h1.3v1.3h-1.3zM872 887h1.3v1.3h-1.3zM890 887h1.3v1.3h-1.3zM908 887h1.3v1.3h-1.3zM926 887h1.3v1.3h-1.3zM944 887h1.3v1.3h-1.3zM962 887h1.3v1.3h-1.3zM980 887h1.3v1.3h-1.3zM998 887h1.3v1.3h-1.3zM1016 887h1.3v1.3h-1.3zM1034 887h1.3v1.3h-1.3zM1051 887h1.3v1.3h-1.3zM1069 887h1.3v1.3h-1.3zM335 905h1.3v1.3h-1.3zM353 905h1.3v1.3h-1.3zM371 905h1.3v1.3h-1.3zM389 905h1.3v1.3h-1.3zM407 905h1.3v1.3h-1.3zM425 905h1.3v1.3h-1.3zM443 905h1.3v1.3h-1.3zM461 905h1.3v1.3h-1.3zM479 905h1.3v1.3h-1.3zM496 905h1.3v1.3h-1.3zM514 905h1.3v1.3h-1.3zM532 905h1.3v1.3h-1.3zM550 905h1.3v1.3h-1.3zM568 905h1.3v1.3h-1.3zM586 905h1.3v1.3h-1.3zM604 905h1.3v1.3h-1.3zM622 905h1.3v1.3h-1.3zM640 905h1.3v1.3h-1.3zM658 905h1.3v1.3h-1.3zM676 905h1.3v1.3h-1.3zM693 905h1.3v1.3h-1.3zM711 905h1.3v1.3h-1.3zM729 905h1.3v1.3h-1.3zM747 905h1.3v1.3h-1.3zM765 905h1.3v1.3h-1.3zM783 905h1.3v1.3h-1.3zM801 905h1.3v1.3h-1.3zM819 905h1.3v1.3h-1.3zM837 905h1.3v1.3h-1.3zM854 905h1.3v1.3h-1.3zM872 905h1.3v1.3h-1.3zM890 905h1.3v1.3h-1.3zM908 905h1.3v1.3h-1.3zM926 905h1.3v1.3h-1.3zM944 905h1.3v1.3h-1.3zM962 905h1.3v1.3h-1.3zM980 905h1.3v1.3h-1.3zM998 905h1.3v1.3h-1.3zM1016 905h1.3v1.3h-1.3zM1034 905h1.3v1.3h-1.3zM1051 905h1.3v1.3h-1.3zM1069 905h1.3v1.3h-1.3z" fill="#555"/><g stroke="#b4b4b4" stroke-width="1" fill="none"><rect x="444.5" y="552.5" width="27" height="70"/><rect x="453.5" y="560.5" width="10" height="9"/><rect x="444.5" y="606.5" width="27" height="17"/><rect x="440.5" y="623.5" width="54" height="27"/><line x1="448" y1="624" x2="448" y2="650"/><line x1="472" y1="624" x2="472" y2="650"/><rect x="363.5" y="651.5" width="131" height="16"/><line x1="394" y1="652" x2="394" y2="667"/><line x1="427" y1="652" x2="427" y2="667"/><path d="M363.5 520 L378 520 L378 651"/><line x1="363" y1="560" x2="378" y2="560"/><line x1="363" y1="580" x2="378" y2="580"/><line x1="363" y1="600" x2="378" y2="600"/><line x1="363" y1="618" x2="378" y2="618"/><rect x="378.5" y="595.5" width="8" height="22"/><path d="M363 548 L380 548 L395 532 L395 518"/><rect x="368" y="522" width="14" height="14" transform="rotate(45 375 529)"/><rect x="381.5" y="517.5" width="24" height="14"/><circle cx="492" cy="490" r="22"/><circle cx="492" cy="490" r="15"/><circle cx="492" cy="480" r="2"/><circle cx="482" cy="490" r="2"/><circle cx="502" cy="490" r="2"/><circle cx="492" cy="500" r="2"/><path d="M487 462 L487 450 Q492 443 497 450 L497 462 Z"/><path d="M487 518 L487 530 Q492 537 497 530 L497 518 Z"/><path d="M463 486 L451 486 Q444 491 451 496 L463 496 Z"/><path d="M521 486 L533 486 Q540 491 533 496 L521 496 Z"/><rect x="363.5" y="674.5" width="47" height="9"/><line x1="386" y1="675" x2="386" y2="683"/><rect x="365.5" y="710.5" width="20" height="16"/><rect x="368.5" y="865.5" width="17" height="14"/><line x1="369" y1="866" x2="385" y2="879"/><rect x="391.5" y="865.5" width="17" height="14"/><line x1="392" y1="866" x2="408" y2="879"/><rect x="469.5" y="822.5" width="7" height="9"/><ellipse cx="474" cy="856" rx="7" ry="5"/><rect x="567.5" y="812.5" width="16" height="24"/><rect x="567.5" y="837.5" width="16" height="24"/><circle cx="576" cy="824" r="7"/><circle cx="576" cy="849" r="7"/></g><g fill="#b0b0b0"><path d="M425.0 519.0 L422.8 520.4 L423.8 523.0 L421.1 522.6 L420.2 525.6 L418.4 522.5 L416.2 523.8 L415.6 521.9 L413.3 521.1 L415.3 519.0 L412.0 516.4 L415.9 516.4 L415.4 512.8 L418.3 515.1 L420.2 512.3 L420.8 515.9 L424.2 514.7 L423.2 517.5Z"/><path d="M582.7 553.0 L580.1 554.5 L581.4 557.5 L578.3 557.0 L577.2 559.9 L575.2 557.5 L573.2 557.8 L572.9 555.6 L569.1 555.5 L571.8 553.0 L569.2 550.5 L573.3 550.7 L572.8 547.4 L575.4 549.3 L577.1 546.5 L578.1 549.4 L580.3 549.4 L579.5 551.7Z"/></g><g stroke="#b8b8b8" fill="none" stroke-width="1"><rect x="925.5" y="532.5" width="10" height="26"/><path d="M929 533 V558 M926 545 H935"/><path d="M992 600 Q996 594 1004 594 L1014 594"/></g><g stroke="#b4b4b4" stroke-width="1" fill="none"><path d="M514 434 L526 446 M526 434 L514 446 M520 432 L520 448 M512 440 L528 440 M516 433 L524 447 M524 433 L516 447"/><path d="M467 808 L482 804 M468 803 L478 810 M470 806 L476 812"/></g><g fill="#0a0a0a"><path d="M351 505.8 L405 505.8 L405 473.3 L444.3 415.5 L538 415.5 L581.5 474.5 L581.5 544 L572 544 L572 478 L533 425 L448 425 L414.5 477 L414.5 514.7 L362 514.7 L362 892.8 L351 892.8 Z"/><rect x="351" y="881" width="233" height="11.8"/><rect x="362" y="668.8" width="156" height="7.2"/><rect x="544" y="668.8" width="40" height="7.2"/><rect x="478.5" y="676" width="6.3" height="82"/><rect x="478.5" y="780" width="6.3" height="15"/><rect x="362" y="705" width="117" height="6"/><rect x="460" y="795" width="41" height="5.5"/><rect x="534" y="795" width="50" height="5.5"/><rect x="463.2" y="795" width="3.8" height="86"/><rect x="924" y="506" width="101" height="10"/><rect x="1016" y="506" width="9" height="94"/></g><g stroke="#fff" stroke-width="1.1" stroke-dasharray="3 1.6" fill="none"><path d="M360.3 517 V880 M363 883.5 H460 M467 883.5 H583 M363 674.6 H518 M544 674.6 H583 M363 709.6 H478 M483.5 677 V757 M483.5 781 V794 M353 507.4 H406.6 V477 M963 514.5 H1015 M1017.4 516 V600 M451 423.6 L531 423.6 M573.6 481 V543 M534.4 424 L573.4 477 M446.6 424 L413 476.2"/></g><g stroke="#fff" stroke-width=".6" stroke-dasharray="4 1.2" fill="none"><path d="M352 508 V891.5"/></g><g stroke="#888" stroke-width="1.4" stroke-dasharray="3 1.5" fill="none"><path d="M468 798.8 H583"/></g><rect x="460" y="800" width="3.2" height="81" fill="#8a8a8a"/><path d="M461.6 801 V880" stroke="#222" stroke-width="1" stroke-dasharray="1.5 3" fill="none"/><path d="M352 891.8 H583" stroke="#777" stroke-width=".8" stroke-dasharray="4 2" fill="none"/><g fill="none" stroke="#000" stroke-width="1"><rect x="349.5" y="552.5" width="13" height="36"/><rect x="349.5" y="618.5" width="13" height="36"/><rect x="349.5" y="755.5" width="13" height="36"/><rect x="349.5" y="822.5" width="13" height="36"/></g><g fill="#fff" stroke="#000" stroke-width="1"><rect x="416.5" y="879.5" width="29.0" height="14" fill="none"/><rect x="417.5" y="882" width="27.0" height="2.5" stroke="none"/><rect x="481.5" y="879.5" width="29.0" height="14" fill="none"/><rect x="482.5" y="882" width="27.0" height="2.5" stroke="none"/><rect x="458.5" y="414.5" width="25" height="12" fill="none"/><rect x="494.5" y="414.5" width="25" height="12" fill="none"/><rect x="459.5" y="423" width="23" height="2" stroke="none"/><rect x="495.5" y="423" width="23" height="2" stroke="none"/><rect x="519.5" y="669.5" width="24" height="6" fill="#fff"/><rect x="502.5" y="796.5" width="31" height="4" fill="#fff"/><rect x="953.5" y="504.5" width="31" height="12" fill="none"/><rect x="973.5" y="504.5" width="30" height="12" fill="none"/><rect x="1013.5" y="527.5" width="4" height="40" fill="none"/><rect x="478.5" y="757.5" width="6" height="23" fill="#fff"/></g><g stroke="#000" stroke-width="1" fill="none"><path d="M519 669 A 22 22 0 0 1 531 648"/><path d="M531 648 L544 669" stroke-width="1.8"/><path d="M531 648 L540 649 L540 669"/><path d="M479 757 A 22 22 0 0 0 458 771"/><path d="M458 771 L480 782" stroke-width="1.8"/><path d="M458 771 L458 780 L479 780"/><path d="M503 800 A 22 22 0 0 0 519 822"/><path d="M519 822 L532 800" stroke-width="1.8"/><path d="M519 822 L529 822 L529 800"/><path d="M480 673 L458 688" stroke-width="1.5"/></g><g fill="#000"><circle cx="531" cy="648" r="2.2"/><circle cx="458" cy="771" r="2.2"/><circle cx="519" cy="822" r="2.2"/><circle cx="458" cy="688" r="2"/></g><g stroke="#000" stroke-width="1" fill="none"><path d="M371 866 L371 836 M362 851 L384 851"/><circle cx="371" cy="851" r="3.5"/></g><path d="M367 840 L371 829 L375 840 Z M382 847 L393 851 L382 855 Z" fill="#000"/><g><circle cx="375.8" cy="373" r="30.2" fill="none" stroke="#222" stroke-width="0.9"/><circle cx="375.8" cy="373" r="25.3" fill="none" stroke="#222" stroke-width="0.9"/><path d="M375.8 333 L380 369 L416 373 L380 377 L375.8 413 L371.6 377 L336 373 L371.6 369 Z" fill="#000"/><path d="M362 359 L378 370 L373 375 Z M390 359 L373 370 L378 375 Z M362 387 L378 376 L373 371 Z M390 387 L373 376 L378 371 Z" fill="#000"/><circle cx="375.8" cy="373" r="4.9" fill="#fff"/></g><text x="375.8" y="329.5" font-size="9.5" text-anchor="middle" font-family="Liberation Sans" fill="#000">N</text><text x="1051.5" y="440" font-size="13" text-anchor="middle" font-family="Liberation Serif" font-weight="bold" fill="#000">N</text><path d="M1052 443 L1062 483 L1055 474 L1052 482 L1049 474 L1041 483 Z" fill="none" stroke="#000" stroke-width="1"/><path d="M1049 474 L1052 468 L1055 474 L1052 482Z" fill="#000"/><rect x="336" y="970" width="24.5" height="8" fill="#808080"/><rect x="360.5" y="970" width="24.5" height="8" fill="#fff" stroke="#ddd" stroke-width=".5"/><rect x="385" y="970" width="24.5" height="8" fill="#808080"/><rect x="409.5" y="970" width="24.5" height="8" fill="#fff" stroke="#ddd" stroke-width=".5"/><rect x="434" y="970" width="24.5" height="8" fill="#808080"/><text x="386" y="965" font-size="11" font-family="Liberation Sans" fill="#000">5</text><text x="398" y="965" font-size="11" font-family="Liberation Sans" fill="#000">m</text><text x="477.5" y="594.5" font-size="13" font-family="Liberation Sans" fill="#1a1a2a">Eat-in Kitchen</text><text x="400.5" y="692" font-size="13" font-family="Liberation Sans" fill="#1a1a2a">Pantry</text><text x="393.5" y="789" font-size="13" font-family="Liberation Sans" fill="#1a1a2a">Laundry</text><text x="393.5" y="805" font-size="13" font-family="Liberation Sans" fill="#1a1a2a">Storage</text><text x="501.5" y="845" font-size="13" font-family="Liberation Sans" fill="#1a1a2a">1/2 Bath</text><text x="411.5" y="903" font-size="8.5" font-family="Liberation Sans" fill="#2a2a3a">BRH 87.50</text><text x="476.5" y="903" font-size="8.5" font-family="Liberation Sans" fill="#2a2a3a">BRH 87.50</text><text x="450" y="412" font-size="8.5" font-family="Liberation Sans" fill="#2a2a3a">BRH 87.50BRH 87.50</text><text x="925" y="500" font-size="8.5" font-family="Liberation Sans" fill="#2a2a3a">RH 87.50</text><text x="967" y="500" font-size="8.5" font-family="Liberation Sans" fill="#2a2a3a">BRH 87.50</text><text x="0" y="0" font-size="8.5" font-family="Liberation Sans" fill="#2a2a3a" text-anchor="middle" transform="translate(346.5 568) rotate(-90)">BRH 87.50</text><text x="0" y="0" font-size="8.5" font-family="Liberation Sans" fill="#2a2a3a" text-anchor="middle" transform="translate(346.5 636) rotate(-90)">BRH 87.50</text><text x="0" y="0" font-size="8.5" font-family="Liberation Sans" fill="#2a2a3a" text-anchor="middle" transform="translate(346.5 773) rotate(-90)">BRH 87.50</text><text x="0" y="0" font-size="8.5" font-family="Liberation Sans" fill="#2a2a3a" text-anchor="middle" transform="translate(346.5 840) rotate(-90)">BRH 87.50</text><text x="0" y="0" font-size="8.5" font-family="Liberation Sans" fill="#2a2a3a" text-anchor="middle" transform="translate(1034 541) rotate(-90)">BRH 87.50</text><text x="0" y="0" font-size="8.5" font-family="Liberation Sans" fill="#2a2a3a" text-anchor="middle" transform="translate(419 441) rotate(-56)">BRH 87.50</text><text x="0" y="0" font-size="8.5" font-family="Liberation Sans" fill="#2a2a3a" text-anchor="middle" transform="translate(566 439) rotate(56)">BRH 87.50</text></g></svg>
<!-- /PLAN -->
  <div class="a" style="left:1097px;top:471px;width:6px;height:514px;background:#888"></div>
  <!-- right panel -->
  <div class="a" style="left:1123px;top:174px;width:187px;height:250px;background:#fff;border:1px solid #9a9a9a;border-top:2px solid #6e6e6e;border-left:2px solid #7a7a7a"></div>
  <div class="a" style="left:1123px;top:428px;width:187px;height:607px;background:#fff;border:1px solid #9a9a9a;border-top:2px solid #6e6e6e;border-left:2px solid #7a7a7a"></div>
  <!-- status bar -->
  <div class="a" style="left:51px;top:1042px;width:1264px;height:24px;background:linear-gradient(#ececec,#f0f0f0 30%,#f0f0f0 85%,#dcdcdc);border-top:1px solid #a8a8a8"></div>
  <!-- CHROME -->
<svg class="a" style="left:0;top:0" width="1366" height="1117" viewBox="0 0 1366 1117"><path d="M61 60 L65 58 L69 60 L73 58 L73 71 L69 73 L65 71 L61 73 Z" fill="none" stroke="#e0303a" stroke-width="1.5" stroke-linejoin="round"/><path d="M65 58 v13 M69 60 v13" stroke="#e0303a" stroke-width="1.3"/><text x="81" y="69.5" font-size="11.4" font-family="Liberation Sans" fill="#1a1a1a" font-weight="normal" text-anchor="start">Safety Reports 2.8.14.1 INSPECTION 4.3: Demo vestiging</text><path d="M1196 65.5 h10" stroke="#111" stroke-width="1"/><rect x="1241.5" y="60.5" width="9" height="9" rx="1.2" fill="none" stroke="#111" stroke-width="1"/><path d="M1287 60 L1297 70 M1297 60 L1287 70" stroke="#111" stroke-width="1"/><text x="60" y="96.5" font-size="11.5" font-family="Liberation Sans" fill="#000" font-weight="normal" text-anchor="start">Bestand</text><text x="117" y="96.5" font-size="11.5" font-family="Liberation Sans" fill="#000" font-weight="normal" text-anchor="start">Bewerken</text><text x="182" y="96.5" font-size="11.5" font-family="Liberation Sans" fill="#000" font-weight="normal" text-anchor="start">Project</text><text x="233" y="96.5" font-size="11.5" font-family="Liberation Sans" fill="#000" font-weight="normal" text-anchor="start">Venster</text><text x="286" y="96.5" font-size="11.5" font-family="Liberation Sans" fill="#000" font-weight="normal" text-anchor="start">Help</text><path d="M54.8 107.6 L56.8 106" stroke="#b4b4b4" stroke-width="1.2"/><path d="M54.8 111.6 L56.8 110" stroke="#b4b4b4" stroke-width="1.2"/><path d="M54.8 115.6 L56.8 114" stroke="#b4b4b4" stroke-width="1.2"/><path d="M54.8 119.6 L56.8 118" stroke="#b4b4b4" stroke-width="1.2"/><path d="M54.8 123.6 L56.8 122" stroke="#b4b4b4" stroke-width="1.2"/><text x="70" y="120" font-size="11.1" font-family="Liberation Sans" fill="#000" font-weight="normal" text-anchor="start">Terug naar project overzicht</text><rect x="216.5" y="106.5" width="248" height="19" fill="#fff" stroke="#adadad"/><text x="219.5" y="120" font-size="11.1" font-family="Liberation Sans" fill="#000" font-weight="normal" text-anchor="start">Inventaris</text><path d="M451 115 L455 119 L459 115" fill="none" stroke="#333" stroke-width="1"/><rect x="471.5" y="106.5" width="149" height="19" fill="#fff" stroke="#adadad"/><text x="474.5" y="120" font-size="11.1" font-family="Liberation Sans" fill="#000" font-weight="normal" text-anchor="start">NL</text><path d="M607 115 L611 119 L615 115" fill="none" stroke="#333" stroke-width="1"/><rect x="637.5" y="106.5" width="74" height="19" fill="#fff" stroke="#adadad"/><text x="640.5" y="120" font-size="11.1" font-family="Liberation Sans" fill="#000" font-weight="normal" text-anchor="start">Geen filter</text><path d="M698 115 L702 119 L706 115" fill="none" stroke="#333" stroke-width="1"/><path d="M721 113 h26 M721 116 h26 M721 119 h26" stroke="#888" stroke-width="1"/><path d="M732 109 L738 112 L738 124 L732 121 Z" fill="#ccc" stroke="#777" stroke-width="1"/><g transform="translate(767.5 117) scale(.78) translate(-767.5 -117)"><path d="M762.0 115.5 A5.6 5.6 0 1 1 766.5 122.6" fill="none" stroke="#3f8f3f" stroke-width="4.6"/><path d="M762.0 115.5 A5.6 5.6 0 1 1 766.5 122.6" fill="none" stroke="#6cbf6c" stroke-width="3"/><path d="M761.0 119 L767.0 118.5 L766.5 125.5 Z" fill="#5aaf5a" stroke="#3f8f3f" stroke-width=".7"/></g><text x="798" y="120" font-size="11.1" font-family="Liberation Sans" fill="#000" font-weight="normal" text-anchor="start">Lijsten...</text><defs><linearGradient id="tabA" x1="0" y1="0" x2="0" y2="1"><stop offset="0" stop-color="#fdfdfd"/><stop offset="1" stop-color="#f3f3f3"/></linearGradient><linearGradient id="tabI" x1="0" y1="0" x2="0" y2="1"><stop offset="0" stop-color="#fafafa"/><stop offset="1" stop-color="#ececec"/></linearGradient><linearGradient id="hdr" x1="0" y1="0" x2="0" y2="1"><stop offset="0" stop-color="#f7f7f7"/><stop offset=".5" stop-color="#f0f0f0"/><stop offset="1" stop-color="#e2e2e2"/></linearGradient></defs><path d="M51 152.5 H306" stroke="#a0a0a0"/><path d="M146 152.5 L146 134.5 Q146 131.5 149 131.5 L213 131.5 Q216 131.5 216 134.5 L216 152.5" fill="url(#tabI)" stroke="#a0a0a0" stroke-width="1"/><path d="M61 152.5 L81 133 Q83 131.5 86 131.5 L143 131.5 Q146 131.5 146 134.5 L146 152.5" fill="url(#tabA)" stroke="#a0a0a0" stroke-width="1"/><rect x="62" y="150" width="84" height="3" fill="#f3f3f3"/><path d="M85 137 L93 139 L101 137 L101 148 L93 150 L85 148 Z" fill="#2a5a9a"/><path d="M86.5 138.5 L92.5 140 L92.5 147.5 L86.5 146 Z M93.5 140 L99.5 138.5 L99.5 146 L93.5 147.5 Z" fill="#e8eef6"/><text x="104" y="146" font-size="11" font-family="Liberation Sans" fill="#000" font-weight="normal" text-anchor="start">Project</text><circle cx="161" cy="140" r="4.5" fill="#f8f4d8" stroke="#666" stroke-width="1.3"/><path d="M164 143 L169 148" stroke="#8a5020" stroke-width="2.2" stroke-linecap="round"/><text x="175" y="146" font-size="11" font-family="Liberation Sans" fill="#000" font-weight="normal" text-anchor="start">Zoeken</text><path d="M310 152.5 H1116" stroke="#a0a0a0"/><path d="M317 152.5 L337 133 Q339 131.5 342 131.5 L434 131.5 Q437 131.5 437 134.5 L437 152.5" fill="url(#tabA)" stroke="#a0a0a0" stroke-width="1"/><rect x="318" y="150" width="119" height="3" fill="#f3f3f3"/><path d="M345.5 147.5 L345.5 140 L352 135 L358.5 140 L358.5 147.5 Z" fill="#f4f4f4" stroke="#888" stroke-width="1"/><path d="M346 143.5 h12" stroke="#c06020" stroke-width="1"/><text x="363" y="146" font-size="11" font-family="Liberation Sans" fill="#000" font-weight="bold" text-anchor="start">Gelijkvloers</text><path d="M1057.5 137 L1053 141 L1057.5 145 Z M1069.5 137 L1074 141 L1069.5 145 Z" fill="none" stroke="#000" stroke-width="1"/><rect x="1083.5" y="136.5" width="8" height="9" fill="none" stroke="#000" stroke-width="1"/><path d="M1085 138.5 h5 M1085 140.5 h5 M1085 142.5 h5" stroke="#000" stroke-width="1"/><path d="M1099.5 137.5 L1106.5 144.5 M1106.5 137.5 L1099.5 144.5" stroke="#000" stroke-width="1.8"/><path d="M1120 152.5 H1315" stroke="#a0a0a0"/><path d="M1130 152.5 L1150 133 Q1152 131.5 1155 131.5 L1229 131.5 Q1232 131.5 1232 134.5 L1232 152.5" fill="url(#tabA)" stroke="#a0a0a0" stroke-width="1"/><rect x="1131" y="150" width="101" height="3" fill="#f3f3f3"/><path d="M1156 142 h3 v-4 h4 v-2 q2-2 3 0 v2 h3 v4 h2 q2 1 0 3 h-2 v5 h-13 z" fill="#5aaa5a" stroke="#3a8a3a" stroke-width=".6"/><text x="1173" y="146" font-size="11" font-family="Liberation Sans" fill="#000" font-weight="normal" text-anchor="start">Bibliotheek</text><rect x="55" y="155" width="248" height="19" fill="url(#hdr)"/><text x="60" y="168" font-size="11" font-family="Liberation Sans" fill="#1a1a2a" font-weight="normal" text-anchor="start">Project</text><rect x="1123" y="155" width="187" height="19" fill="url(#hdr)"/><text x="1127" y="168" font-size="11" font-family="Liberation Sans" fill="#1a1a2a" font-weight="normal" text-anchor="start">Bibliotheek</text><rect x="220.5" y="160.0" width="9" height="9" fill="none" stroke="#111" stroke-width="1"/><rect x="240.5" y="162.0" width="7" height="7" fill="none" stroke="#111" stroke-width="1"/><path d="M242.5 162.0 v-2 h7 v7 h-2" fill="none" stroke="#111" stroke-width="1"/><path d="M262.5 160.0 h5 v5 h-5 z M261 165.0 h8 M265 165.0 v5" fill="none" stroke="#111" stroke-width="1"/><path d="M281 160.5 L289 168.5 M289 160.5 L281 168.5" stroke="#111" stroke-width="1"/><rect x="1228.5" y="160.0" width="9" height="9" fill="none" stroke="#111" stroke-width="1"/><rect x="1248.5" y="162.0" width="7" height="7" fill="none" stroke="#111" stroke-width="1"/><path d="M1250.5 162.0 v-2 h7 v7 h-2" fill="none" stroke="#111" stroke-width="1"/><path d="M1270.5 160.0 h5 v5 h-5 z M1269 165.0 h8 M1273 165.0 v5" fill="none" stroke="#111" stroke-width="1"/><path d="M1289 160.5 L1297 168.5 M1297 160.5 L1289 168.5" stroke="#111" stroke-width="1"/><circle cx="63" cy="180" r="2" fill="#3a9a3a"/><path d="M63 182 v12 M60.5 191 L63 194.5 L65.5 191 M63 182.5 h5 v10 h2 M68 187 h2" fill="none" stroke="#333" stroke-width="1"/><rect x="69.5" y="185.5" width="3" height="3" fill="none" stroke="#c0a020"/><rect x="69.5" y="191.5" width="3" height="3" fill="none" stroke="#c0a020"/><path d="M86.5 180 v12" stroke="#111" stroke-width="1.4"/><path d="M84 190 L86.5 194 L89 190Z" fill="#111"/><text x="89" y="186" font-size="8" font-family="Liberation Serif" fill="#5a6ab0">a</text><text x="92" y="194" font-size="9" font-family="Liberation Serif" fill="#9a3a9a">z</text><rect x="104.5" y="177" width="1" height="19" fill="#a0a0a0"/><path d="M111 178 L119 178 L125 185 L118 192 L111 185 Z" fill="#e8eef8" stroke="#aaa" stroke-width=".8"/><rect x="114" y="182" width="5" height="4" fill="#6ab0e8"/><path d="M117 194 L127 184" stroke="#e0a030" stroke-width="3.5" stroke-linecap="round"/><path d="M116 195 L118 191" stroke="#8a5020" stroke-width="1.5"/><path d="M142 180 L137 186 L140 186 L140 194 L144 194 L144 186 L147 186 Z" fill="#999"/><path d="M165 194 L160 188 L163 188 L163 180 L167 180 L167 188 L170 188 Z" fill="#999"/><rect x="179.5" y="177" width="1" height="19" fill="#a0a0a0"/><circle cx="193.2" cy="186.3" r="7.5" fill="#e04040" stroke="#b02020" stroke-width=".8"/><circle cx="193.2" cy="186.3" r="4.8" fill="none" stroke="#fff" stroke-width="1.6"/><path d="M189.7 189.8 L196.7 182.8" stroke="#fff" stroke-width="1.6"/><rect x="208.5" y="177" width="1" height="19" fill="#a0a0a0"/><path d="M229.5 183.3 L217.5 183.3 M215.5 189.3 L227.5 189.3" stroke="#e0a020" stroke-width="2.6"/><path d="M219.5 178.3 L214.5 183.3 L219.5 187.3Z M225.5 185.3 L230.5 189.3 L225.5 194.3Z" fill="#f0c040" stroke="#c08010" stroke-width=".8"/><rect x="236" y="177" width="19" height="19" fill="#fafafa"/><path d="M239.9 185.5 A5.6 5.6 0 1 1 244.4 192.6" fill="none" stroke="#3f8f3f" stroke-width="4.6"/><path d="M239.9 185.5 A5.6 5.6 0 1 1 244.4 192.6" fill="none" stroke="#6cbf6c" stroke-width="3"/><path d="M238.9 189 L244.9 188.5 L244.4 195.5 Z" fill="#5aaf5a" stroke="#3f8f3f" stroke-width=".7"/><path d="M250.4 177 v7 M246.9 180.5 h7" stroke="#1010f0" stroke-width="2"/><path d="M263.1 185.5 A5.6 5.6 0 1 1 267.6 192.6" fill="none" stroke="#3f8f3f" stroke-width="4.6"/><path d="M263.1 185.5 A5.6 5.6 0 1 1 267.6 192.6" fill="none" stroke="#6cbf6c" stroke-width="3"/><path d="M262.1 189 L268.1 188.5 L267.6 195.5 Z" fill="#5aaf5a" stroke="#3f8f3f" stroke-width=".7"/><path d="M83.5 216.1 V329.4" stroke="#999" stroke-width="1" stroke-dasharray="1 1"/><path d="M102.5 230.3 V284" stroke="#999" stroke-width="1" stroke-dasharray="1 1"/><path d="M121.5 246.3 V253.3" stroke="#999" stroke-width="1" stroke-dasharray="1 1"/><path d="M121.5 292 V299.2" stroke="#999" stroke-width="1" stroke-dasharray="1 1"/><path d="M140.5 259.3 V268.3" stroke="#999" stroke-width="1" stroke-dasharray="1 1"/><path d="M140.5 305.2 V314.2" stroke="#999" stroke-width="1" stroke-dasharray="1 1"/><path d="M69 208.6 H75" stroke="#999" stroke-width="1" stroke-dasharray="1 1"/><path d="M88 223.8 H93" stroke="#999" stroke-width="1" stroke-dasharray="1 1"/><path d="M107 238.8 H113" stroke="#999" stroke-width="1" stroke-dasharray="1 1"/><path d="M126 253.8 H131" stroke="#999" stroke-width="1" stroke-dasharray="1 1"/><path d="M145 268.8 H151" stroke="#999" stroke-width="1" stroke-dasharray="1 1"/><path d="M107 284.5 H113" stroke="#999" stroke-width="1" stroke-dasharray="1 1"/><path d="M126 299.7 H131" stroke="#999" stroke-width="1" stroke-dasharray="1 1"/><path d="M141 314.7 H151" stroke="#999" stroke-width="1" stroke-dasharray="1 1"/><path d="M88 329.9 H93" stroke="#999" stroke-width="1" stroke-dasharray="1 1"/><rect x="59.5" y="203.6" width="9" height="9" fill="#fff" stroke="#a0a0a8" stroke-width="1"/><path d="M61.5 208.1 h5" stroke="#3a4aa0" stroke-width="1"/><rect x="78.5" y="218.8" width="9" height="9" fill="#fff" stroke="#a0a0a8" stroke-width="1"/><path d="M80.5 223.3 h5" stroke="#3a4aa0" stroke-width="1"/><rect x="97.5" y="233.8" width="9" height="9" fill="#fff" stroke="#a0a0a8" stroke-width="1"/><path d="M99.5 238.3 h5" stroke="#3a4aa0" stroke-width="1"/><rect x="116.5" y="248.8" width="9" height="9" fill="#fff" stroke="#a0a0a8" stroke-width="1"/><path d="M118.5 253.3 h5" stroke="#3a4aa0" stroke-width="1"/><rect x="135.5" y="263.8" width="9" height="9" fill="#fff" stroke="#a0a0a8" stroke-width="1"/><path d="M137.5 268.3 h5" stroke="#3a4aa0" stroke-width="1"/><path d="M140 265.8 v5" stroke="#3a4aa0" stroke-width="1"/><rect x="97.5" y="279.5" width="9" height="9" fill="#fff" stroke="#a0a0a8" stroke-width="1"/><path d="M99.5 284 h5" stroke="#3a4aa0" stroke-width="1"/><rect x="116.5" y="294.7" width="9" height="9" fill="#fff" stroke="#a0a0a8" stroke-width="1"/><path d="M118.5 299.2 h5" stroke="#3a4aa0" stroke-width="1"/><rect x="78.5" y="324.9" width="9" height="9" fill="#fff" stroke="#a0a0a8" stroke-width="1"/><path d="M80.5 329.4 h5" stroke="#3a4aa0" stroke-width="1"/><path d="M83 326.9 v5" stroke="#3a4aa0" stroke-width="1"/><rect x="75.5" y="200.5" width="14" height="15" fill="#fafafa" stroke="#7a3a10" stroke-width="1.4"/><rect x="78" y="203" width="4" height="3" fill="#fff" stroke="#bbb" stroke-width=".7"/><rect x="84" y="209" width="4" height="4" fill="#fff" stroke="#bbb" stroke-width=".7"/><path d="M113.5 245.8 L113.5 236.3 L121 230.3 L128.5 236.3 L128.5 245.8 Z" fill="#fdfdfd" stroke="#7a3a10" stroke-width="1.5" stroke-linejoin="round"/><path d="M114 236.3 h14" stroke="#7a3a10" stroke-width="1.1"/><path d="M113.5 291.5 L113.5 282 L121 276 L128.5 282 L128.5 291.5 Z" fill="#fdfdfd" stroke="#7a3a10" stroke-width="1.5" stroke-linejoin="round"/><path d="M114 282 h14" stroke="#7a3a10" stroke-width="1.1"/><path d="M151.0 275.8 L151.0 266.3 L158.5 260.8 L166.0 266.3 L166.0 275.8 Z" fill="#f6f6f6" stroke="#888" stroke-width="1.1"/><path d="M151.5 266.8 h14" stroke="#888" stroke-width="1"/><path d="M151.5 270.8 h14" stroke="#c06020" stroke-width="1"/><path d="M151.0 321.7 L151.0 312.2 L158.5 306.7 L166.0 312.2 L166.0 321.7 Z" fill="#f6f6f6" stroke="#888" stroke-width="1.1"/><path d="M151.5 312.7 h14" stroke="#888" stroke-width="1"/><path d="M151.5 316.7 h14" stroke="#c06020" stroke-width="1"/><text x="94.4" y="212.1" font-size="10.5" font-family="Liberation Sans" fill="#000" font-weight="normal" text-anchor="start">Demo vestiging</text><text x="93.4" y="227.3" font-size="10.5" font-family="Liberation Sans" fill="#000" font-weight="normal" text-anchor="start">Locaties</text><text x="132.5" y="242.3" font-size="10.5" font-family="Liberation Sans" fill="#000" font-weight="normal" text-anchor="start">Gebouw 1</text><text x="131.4" y="257.3" font-size="10.5" font-family="Liberation Sans" fill="#000" font-weight="normal" text-anchor="start">Locaties</text><text x="170.5" y="272.3" font-size="10.5" font-family="Liberation Sans" fill="#000" font-weight="normal" text-anchor="start">Gelijkvloers</text><text x="132.5" y="288" font-size="10.5" font-family="Liberation Sans" fill="#000" font-weight="normal" text-anchor="start">Gebouw 2</text><text x="131.4" y="303.2" font-size="10.5" font-family="Liberation Sans" fill="#000" font-weight="normal" text-anchor="start">Locaties</text><text x="93.4" y="333.4" font-size="10.5" font-family="Liberation Sans" fill="#000" font-weight="normal" text-anchor="start">Evacuatie</text><rect x="170" y="306.5" width="58" height="15" fill="#0078d7"/><text x="170.8" y="318.2" font-size="10.5" font-family="Liberation Sans" fill="#fff" font-weight="normal" text-anchor="start">Gelijkvloers</text><defs><clipPath id="libc"><rect x="1124" y="175" width="185" height="248"/></clipPath></defs><g clip-path="url(#libc)"><text x="1125" y="187.6" font-size="10.7" font-family="Liberation Sans" fill="#000" font-weight="normal" text-anchor="start">Afsluiter</text><text x="1125" y="203.6" font-size="10.7" font-family="Liberation Sans" fill="#000" font-weight="normal" text-anchor="start">Automatische blusinstallatie</text><text x="1125" y="219.6" font-size="10.7" font-family="Liberation Sans" fill="#000" font-weight="normal" text-anchor="start">Bestemming van lokalen</text><text x="1125" y="235.6" font-size="10.7" font-family="Liberation Sans" fill="#000" font-weight="normal" text-anchor="start">Blusmiddel</text><text x="1125" y="251.6" font-size="10.7" font-family="Liberation Sans" fill="#000" font-weight="normal" text-anchor="start">Bluswatervoorziening</text><text x="1125" y="267.6" font-size="10.7" font-family="Liberation Sans" fill="#000" font-weight="normal" text-anchor="start">Compartimentering</text><text x="1125" y="283.6" font-size="10.7" font-family="Liberation Sans" fill="#000" font-weight="normal" text-anchor="start">Eerste hulp</text><text x="1125" y="299.6" font-size="10.7" font-family="Liberation Sans" fill="#000" font-weight="normal" text-anchor="start">Evacuatie</text><text x="1125" y="315.6" font-size="10.7" font-family="Liberation Sans" fill="#000" font-weight="normal" text-anchor="start">Evacuatieplan</text><text x="1125" y="331.6" font-size="10.7" font-family="Liberation Sans" fill="#000" font-weight="normal" text-anchor="start">Gevaarlijke stof</text><text x="1125" y="347.6" font-size="10.7" font-family="Liberation Sans" fill="#000" font-weight="normal" text-anchor="start">Gevaren</text><text x="1125" y="363.6" font-size="10.7" font-family="Liberation Sans" fill="#000" font-weight="normal" text-anchor="start">Interventie</text><text x="1125" y="379.6" font-size="10.7" font-family="Liberation Sans" fill="#000" font-weight="normal" text-anchor="start">Locaties</text><text x="1125" y="395.6" font-size="10.7" font-family="Liberation Sans" fill="#000" font-weight="normal" text-anchor="start">Melding &amp; detectie</text><text x="1125" y="411.6" font-size="10.7" font-family="Liberation Sans" fill="#000" font-weight="normal" text-anchor="start">Noodverlichting</text><text x="1125" y="427.6" font-size="10.7" font-family="Liberation Sans" fill="#000" font-weight="normal" text-anchor="start">Plaatsbepaling</text></g><rect x="1290" y="176" width="18" height="247" fill="#f0f0f0"/><rect x="1296" y="197" width="6" height="166" fill="#888"/><path d="M59 1061 L70 1050" stroke="#e8c040" stroke-width="4" stroke-linecap="round"/><path d="M59 1061 L70 1050" stroke="#a07020" stroke-width="5.5" stroke-linecap="round" opacity=".35"/><path d="M58 1062 L60 1058 L62 1060 Z" fill="#6a3a10"/><text x="76" y="1058" font-size="11" font-family="Liberation Sans" fill="#1a1a2a" font-weight="normal" text-anchor="start">wim</text><rect x="121" y="1047" width="1" height="16" fill="#a0a0a0"/><rect x="360.5" y="1047" width="1" height="16" fill="#a0a0a0"/><rect x="496" y="1047" width="1" height="16" fill="#a0a0a0"/><rect x="1199" y="1047" width="1" height="16" fill="#a0a0a0"/><path d="M229 1051 h4 M241 1051 h4" stroke="#222" stroke-width="2"/><path d="M233 1051 Q233 1058 237 1058 Q241 1058 241 1051 M233 1058 L236 1052 L238 1052 L241 1058" fill="none" stroke="#999" stroke-width=".9"/><text x="249" y="1058" font-size="11" font-family="Liberation Sans" fill="#1a1a2a" font-weight="normal" text-anchor="start">?</text><text x="502.5" y="1058" font-size="11" font-family="Liberation Sans" fill="#1a1a2a" font-weight="normal" text-anchor="start">x: 10,58 m</text><rect x="937.5" y="1049.5" width="257" height="10" fill="#e6e6e6" stroke="#bcbcbc"/><circle cx="1213.5" cy="1055" r="6.5" fill="#e8d8a0" stroke="#a08040" stroke-width="1"/><circle cx="1213.5" cy="1055" r="4.5" fill="#fff" stroke="#6080b0" stroke-width=".8"/><path d="M1213.5 1052 v3 h2" stroke="#333" stroke-width=".9" fill="none"/><text x="1226.5" y="1058.5" font-size="11" font-family="Liberation Sans" fill="#111" font-weight="normal" text-anchor="start">17:36:47</text><path d="M423 1013.5 L423 1031.5 Q423 1034.5 426 1034.5 L528 1034.5 Q531 1034.5 531 1031.5 L531 1013.5" fill="url(#tabI)" stroke="#a0a0a0"/><path d="M531 1013.5 L531 1031.5 Q531 1034.5 534 1034.5 L597 1034.5 Q600 1034.5 600 1031.5 L600 1013.5" fill="url(#tabI)" stroke="#a0a0a0"/><path d="M313 1013.5 L335 1033 Q337 1034.5 340 1034.5 L418 1034.5 Q421 1034.5 421 1031.5 L421 1013.5" fill="url(#tabA)" stroke="#a0a0a0"/><rect x="314" y="1012" width="107" height="2" fill="#f3f3f3"/><rect x="343.5" y="1016.5" width="13" height="15" fill="#fafafa" stroke="#bbb"/><path d="M346 1029 L357 1018" stroke="#e0b040" stroke-width="3" stroke-linecap="round"/><path d="M345 1027 q2 -4 5 -3" stroke="#5a8ad0" stroke-width="2" fill="none"/><text x="362" y="1028" font-size="11" font-family="Liberation Sans" fill="#000" font-weight="bold" text-anchor="start">Tekening</text><rect x="431.5" y="1016.5" width="12" height="15" fill="#fafafa" stroke="#999"/><path d="M433 1017 v14" stroke="#c05020" stroke-width="1.5"/><path d="M436 1021 h6 M436 1024 h6 M436 1027 h6" stroke="#5a7ac0" stroke-width="1"/><text x="448" y="1028" font-size="11" font-family="Liberation Sans" fill="#000" font-weight="normal" text-anchor="start">Eigenschappen</text><rect x="538.5" y="1017.5" width="15" height="11" fill="#f8e0a0" stroke="#b07030"/><path d="M539 1021 h15 M544 1018 v10 M549 1018 v10" stroke="#b07030" stroke-width=".8"/><circle cx="543" cy="1030" r="2.5" fill="none" stroke="#3a5aa0" stroke-width="1.2"/><circle cx="550" cy="1030" r="2.5" fill="none" stroke="#3a5aa0" stroke-width="1.2"/><text x="556" y="1028" font-size="11" font-family="Liberation Sans" fill="#000" font-weight="normal" text-anchor="start">Relaties</text><rect x="524" y="998" width="400" height="6" fill="#888"/></svg>
<!-- /CHROME -->
  <!-- main context menu -->
  <div class="menu" style="left:583px;top:355px;width:342px;height:720px"><div class="gut"></div></div>
  <div class="menu" style="left:924px;top:600px;width:279px;height:387px"><div class="gut"></div></div>
  <!-- MENUICONS -->
<svg class="a" style="left:0;top:0" width="1366" height="1117" viewBox="0 0 1366 1117"><path d="M588.5 418.5 L590.5 407.5 L595.5 409.5 L602.5 405.5 L600.5 416.5 L595.5 415.5 Z" fill="none" stroke="#000" stroke-width="1.1"/><path d="M588.5 527.5 L588.5 521.5 L598.5 521.5 M602.5 521.5 L602.5 527.5 L592.5 527.5" fill="none" stroke="#000" stroke-width="2.4"/><path d="M597.5 517.5 L602.5 521.5 L597.5 525.5Z M593.5 523.5 L588.5 527.5 L593.5 531.5Z" fill="#000"/><path d="M589 630 L597 630 L603 637 L596 644 L589 637 Z" fill="#e8eef8" stroke="#aaa" stroke-width=".8"/><rect x="592" y="634" width="5" height="4" fill="#6ab0e8"/><path d="M594 646 L604 636" stroke="#e0a030" stroke-width="3.5" stroke-linecap="round"/><path d="M593 647 L595 643" stroke="#8a5020" stroke-width="1.5"/><rect x="588" y="720" width="10" height="12" rx="1" fill="#a8a8a8"/><rect x="594" y="725" width="10" height="11" rx="1" fill="#b8b8b8" stroke="#f0f0f0" stroke-width=".8"/><circle cx="595.5" cy="748.5" r="7.5" fill="#e04040" stroke="#b02020" stroke-width=".8"/><circle cx="595.5" cy="748.5" r="4.8" fill="none" stroke="#fff" stroke-width="1.6"/><path d="M592.0 752.0 L599.0 745.0" stroke="#fff" stroke-width="1.6"/></svg>
<!-- /MENUICONS -->
  <!-- MENUITEMS -->
<div class="mi" style="left:616px;top:360.5px">Openen</div>
<div class="arr" style="left:906px;top:364.7px"></div>
<div class="mi" style="left:616px;top:381.6px">Tonen</div>
<div class="arr" style="left:906px;top:385.8px"></div>
<div class="sep" style="left:616px;top:400px;width:307px"></div>
<div class="mi" style="left:616px;top:406.7px">Voorstelling opmaak ...</div>
<div class="mi" style="left:616px;top:428.8px">Label tonen/verbergen</div>
<div class="mi" style="left:616px;top:449.8px">Volgorde</div>
<div class="arr" style="left:906px;top:454px"></div>
<div class="mi dis" style="left:616px;top:472.3px">Herstel verhoudingen</div>
<div class="sep" style="left:616px;top:490px;width:307px"></div>
<div class="mi" style="left:616px;top:496.4px">Figuur aanpassen ...</div>
<div class="mi" style="left:616px;top:518.3px">Draaien ...</div>
<div class="mi" style="left:616px;top:539.8px">Vorm aanpassen</div>
<div class="arr" style="left:906px;top:544px"></div>
<div class="mi" style="left:616px;top:560.8px">Uitlijning</div>
<div class="arr" style="left:906px;top:565px"></div>
<div class="sep" style="left:616px;top:579px;width:307px"></div>
<div class="mi dis" style="left:616px;top:585.3px">Master maken</div>
<div class="mi dis" style="left:616px;top:607.4px">Splitsen</div>
<div class="mi" style="left:616px;top:629.3px">Hernoemen ...</div>
<div class="mi" style="left:882px;top:629.3px">F2</div>
<div class="mi dis" style="left:616px;top:651.5px">Uitsnijden ...</div>
<div class="mi dis" style="left:616px;top:673.4px">Alles herstellen op crop</div>
<div class="mi dis" style="left:616px;top:695.3px">Objecten nummeren ...</div>
<div class="sep" style="left:616px;top:714px;width:307px"></div>
<div class="mi dis" style="left:616px;top:720.2px">Dupliceren</div>
<div class="mi" style="left:616px;top:742.1px">Verwijderen</div>
<div class="mi" style="left:882px;top:742.1px">Delete</div>
<div class="sep" style="left:616px;top:761px;width:307px"></div>
<div class="mi" style="left:616px;top:767.5px">Alles selecteren</div>
<div class="mi" style="left:616px;top:789.4px">Type Dubbele deur selecteren</div>
<div class="sep" style="left:616px;top:808px;width:307px"></div>
<div class="mi" style="left:616px;top:814.5px">Alle labels tonen</div>
<div class="mi" style="left:616px;top:836.4px">Alle labels verbergen</div>
<div class="mi" style="left:616px;top:858.3px">Noordpijl draaien ...</div>
<div class="mi" style="left:616px;top:880.5px">Het tekenraster instellen ...</div>
<div class="mi" style="left:616px;top:901.8px">Overlegger</div>
<div class="arr" style="left:906px;top:906px"></div>
<div class="mi dis" style="left:616px;top:923.8px">Layout alle iconen</div>
<div class="mi dis" style="left:616px;top:945.8px">Reset crop rechthoek</div>
<div class="sep" style="left:616px;top:964px;width:307px"></div>
<div class="hl" style="left:585px;top:966px;width:337px;height:21px"></div>
<div class="mi" style="left:616px;top:969.3px">Achtergrond</div>
<div class="arr" style="left:906px;top:973.5px"></div>
<div class="sep" style="left:616px;top:988px;width:307px"></div>
<div class="mi" style="left:616px;top:994.8px">Bewaren als afbeelding ...</div>
<div class="mi" style="left:616px;top:1016.7px">Bewaren als pdf ...</div>
<div class="mi dis" style="left:616px;top:1038.8px">Aangevulde achtergrond exporteren (dxf) ...</div>
<div class="mi dis" style="left:616px;top:1060.8px">Gegevens exporteren</div>
<div class="mi dis" style="left:958px;top:606.7px">Lagen ...</div>
<div class="mi dis" style="left:958px;top:628.6px">Alle DXF lijnen zwart maken</div>
<div class="mi dis" style="left:958px;top:650.3px">DXF lagen zwart maken</div>
<div class="mi dis" style="left:958px;top:672.3px">Achtergrondkleur kiezen ...</div>
<div class="hl" style="left:927px;top:690px;width:273px;height:22px"></div>
<div class="mi" style="left:958px;top:694.8px">Alle achtergrondobjecten blauw maken</div>
<div class="mi" style="left:958px;top:716.6px">Achtergrond verbergen</div>
<div class="sep" style="left:958px;top:735px;width:243px"></div>
<div class="mi" style="left:958px;top:741.6px">Tekeneenheid ...</div>
<div class="mi" style="left:958px;top:763.7px">Achtergrond draaien...</div>
<div class="mi" style="left:958px;top:785.9px">Versie informatie ...</div>
<div class="sep" style="left:958px;top:804px;width:243px"></div>
<div class="mi dis" style="left:958px;top:810.5px">Achtergrond inlezen ...</div>
<div class="mi dis" style="left:958px;top:832.5px">Achtergrond inlezen door GIS ...</div>
<div class="mi" style="left:958px;top:854.5px">Achtergrond vervangen ...</div>
<div class="mi" style="left:958px;top:876.4px">Achtergrond vervangen door GIS...</div>
<div class="mi" style="left:958px;top:898.4px">Achtergrond verwijderen</div>
<div class="sep" style="left:958px;top:917px;width:243px"></div>
<div class="mi dis" style="left:958px;top:923.6px">Objecten herkennen ...</div>
<div class="mi dis" style="left:958px;top:945.6px">Automatische detectie instellingen...</div>
<div class="mi" style="left:958px;top:967.6px">Originele achtergrond exporteren ...</div>

<!-- /MENUITEMS -->
</div>
</body></html>
